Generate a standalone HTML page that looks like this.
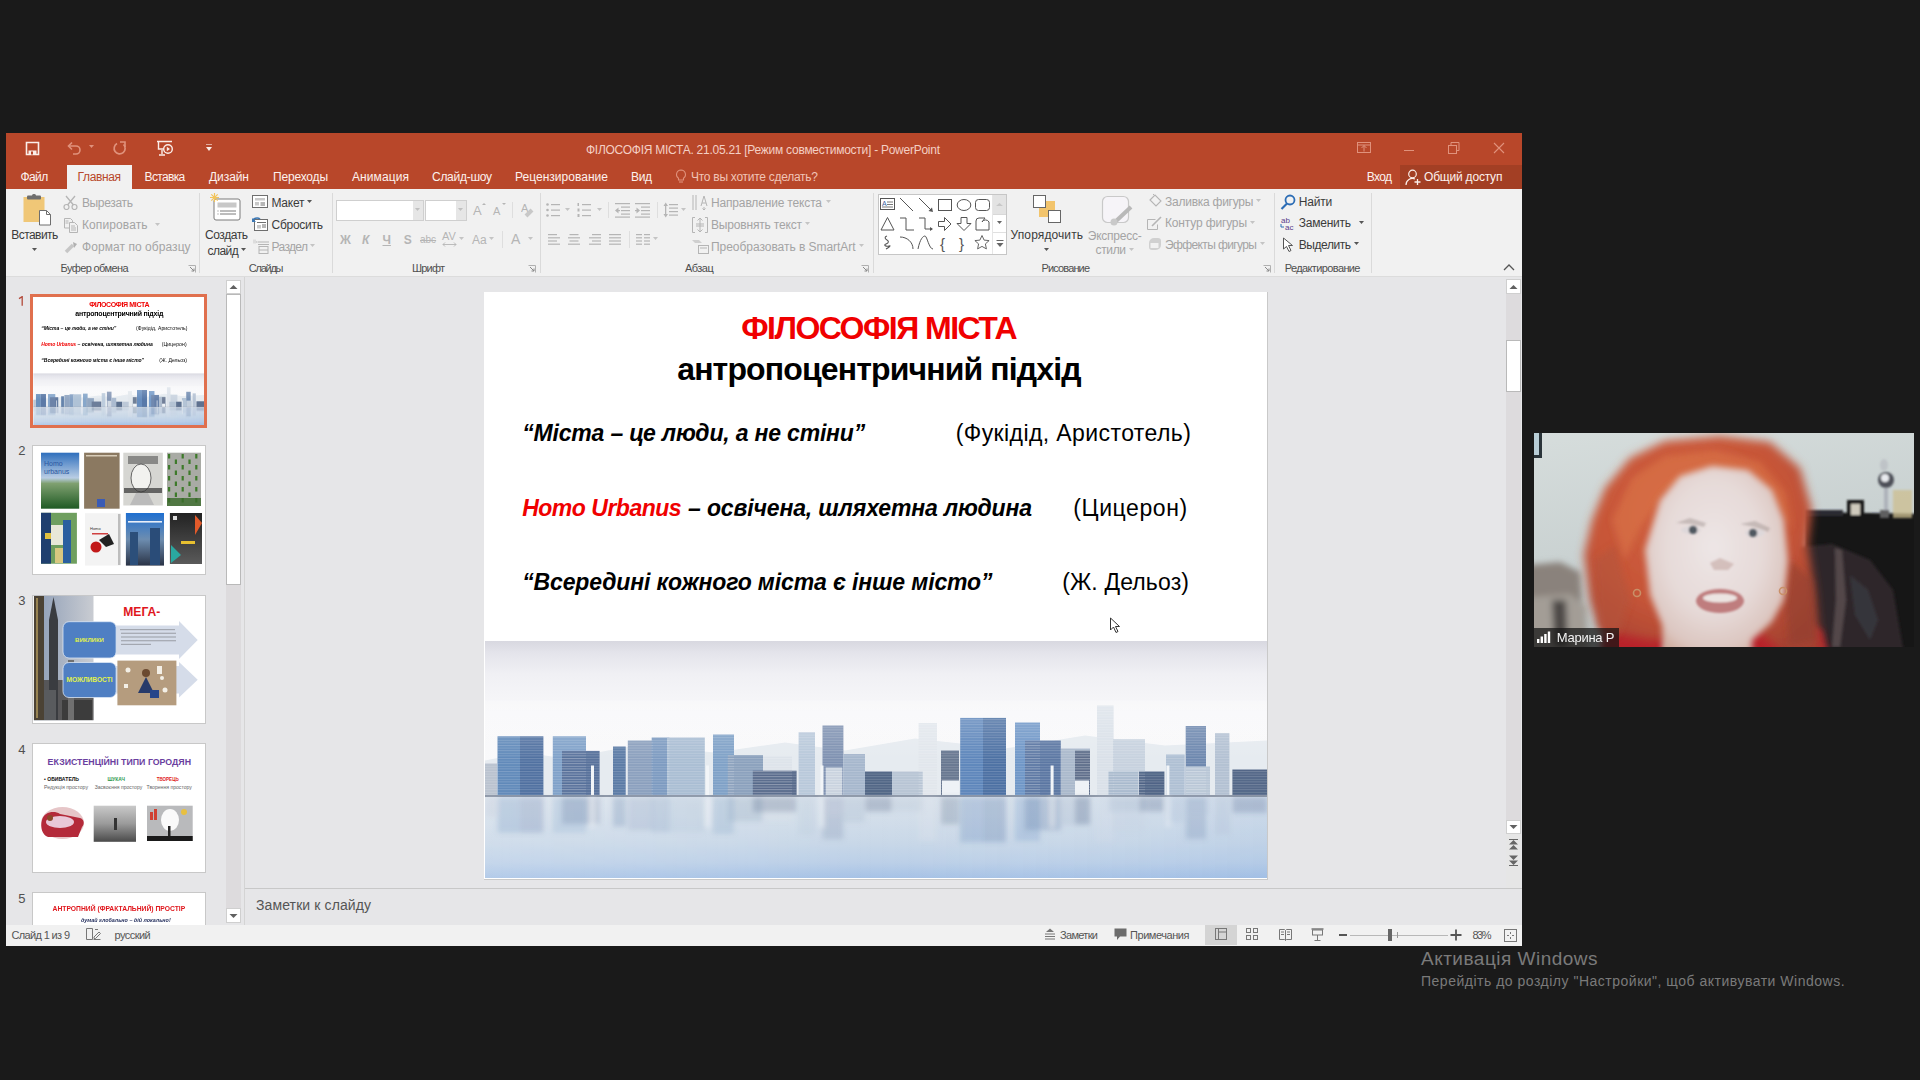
<!DOCTYPE html>
<html><head><meta charset="utf-8">
<style>
*{margin:0;padding:0;box-sizing:border-box}
html,body{width:1920px;height:1080px;overflow:hidden;background:#1a1a1a;font-family:"Liberation Sans",sans-serif}
.a{position:absolute;display:block}
.t{position:absolute;white-space:nowrap;line-height:1}
</style></head><body>
<div class="a" style="left:6px;top:133px;width:1516px;height:813px;background:#e6e6e8;"></div>
<div class="a" style="left:6px;top:133px;width:1516px;height:56px;background:#b8472a;"></div>
<div class="a" style="left:1400px;top:165px;width:122px;height:24px;background:#a33f24;"></div>
<div class="a" style="left:67px;top:165px;width:65px;height:24px;background:#f1f1f1;"></div>
<div class="a" style="left:6px;top:189px;width:1516px;height:88px;background:#f1f1f1;"></div>
<div class="a" style="left:6px;top:276px;width:1516px;height:1px;background:#dcdcdc;"></div>
<div class="a" style="left:6px;top:925px;width:1516px;height:21px;background:#f1f1f1;"></div>
<div class="t" style="left:586.00px;top:143.50px;font-size:12px;color:#f4cfc4;letter-spacing:-0.262px">ФІЛОСОФІЯ МІСТА. 21.05.21 [Режим совместимости] - PowerPoint</div>
<div class="t" style="left:20.50px;top:170.80px;font-size:12px;color:#fdf2ee;letter-spacing:-0.601px">Файл</div>
<div class="t" style="left:144.60px;top:170.80px;font-size:12px;color:#fdf2ee;letter-spacing:-0.651px">Вставка</div>
<div class="t" style="left:209.00px;top:170.80px;font-size:12px;color:#fdf2ee;letter-spacing:-0.067px">Дизайн</div>
<div class="t" style="left:273.00px;top:170.80px;font-size:12px;color:#fdf2ee;letter-spacing:-0.183px">Переходы</div>
<div class="t" style="left:352.00px;top:170.80px;font-size:12px;color:#fdf2ee;letter-spacing:0.095px">Анимация</div>
<div class="t" style="left:432.00px;top:170.80px;font-size:12px;color:#fdf2ee;letter-spacing:-0.276px">Слайд-шоу</div>
<div class="t" style="left:515.00px;top:170.80px;font-size:12px;color:#fdf2ee;letter-spacing:0.026px">Рецензирование</div>
<div class="t" style="left:631.00px;top:170.80px;font-size:12px;color:#fdf2ee;letter-spacing:-0.355px">Вид</div>
<div class="t" style="left:77.60px;top:170.80px;font-size:12px;color:#b8472a;letter-spacing:-0.379px">Главная</div>
<div class="t" style="left:691.00px;top:170.80px;font-size:12px;color:#f0c4b6;letter-spacing:-0.269px">Что вы хотите сделать?</div>
<div class="t" style="left:1366.70px;top:170.80px;font-size:12px;color:#fdf2ee;letter-spacing:-0.616px">Вход</div>
<div class="t" style="left:1424.00px;top:170.80px;font-size:12px;color:#fdf2ee;letter-spacing:-0.202px">Общий доступ</div>
<svg class="a" style="left:25px;top:141px;" width="15" height="15" viewBox="0 0 15 15"><path d="M1.5 1.5h12v12h-12z" fill="none" stroke="#fbeee9" stroke-width="1.6"/><rect x="3.5" y="9.5" width="8" height="4" fill="#fbeee9"/><rect x="6" y="10.5" width="2" height="3" fill="#b8472a"/></svg>
<svg class="a" style="left:66px;top:141px;" width="16" height="15" viewBox="0 0 16 15"><path d="M3 5h7a4 4 0 0 1 0 8H7" fill="none" stroke="#e0927c" stroke-width="1.6"/><path d="M6 1.5L2.5 5 6 8.5" fill="none" stroke="#e0927c" stroke-width="1.6"/></svg>
<svg class="a" style="left:89px;top:145px;" width="6" height="4" viewBox="0 0 6 4"><path d="M0 0h5L2.5 3z" fill="#e0927c"/></svg>
<svg class="a" style="left:112px;top:141px;" width="16" height="15" viewBox="0 0 16 15"><path d="M11.5 3.5A5.5 5.5 0 1 1 5 2.6" fill="none" stroke="#e0927c" stroke-width="1.7"/><path d="M8 1h5v5" fill="none" stroke="#e0927c" stroke-width="1.6"/></svg>
<svg class="a" style="left:156px;top:140px;" width="18" height="17" viewBox="0 0 18 17"><path d="M1 1.5h15M2.5 2v7h7" fill="none" stroke="#fbeee9" stroke-width="1.4"/><circle cx="12" cy="9" r="4.3" fill="#b8472a" stroke="#fbeee9" stroke-width="1.4"/><path d="M10.8 6.8v4.4l3.2-2.2z" fill="#fbeee9"/><path d="M6 10v4M3 15h6" stroke="#fbeee9" stroke-width="1.4"/></svg>
<svg class="a" style="left:206px;top:144px;" width="7" height="8" viewBox="0 0 7 8"><path d="M0 0h6" stroke="#fbeee9" stroke-width="1.2"/><path d="M0 3h6L3 7z" fill="#fbeee9"/></svg>
<svg class="a" style="left:1357px;top:142px;" width="15" height="12" viewBox="0 0 15 12"><rect x="0.5" y="0.5" width="13" height="10" fill="none" stroke="#e0927c"/><path d="M0.5 3h13" stroke="#e0927c"/><path d="M7 3.5v6M4.5 6l2.5-2.5L9.5 6" fill="none" stroke="#e0927c"/></svg>
<div class="a" style="left:1404px;top:150px;width:10px;height:1px;background:#e0927c;"></div>
<svg class="a" style="left:1448px;top:142px;" width="12" height="12" viewBox="0 0 12 12"><rect x="0.5" y="3.5" width="8" height="8" fill="none" stroke="#e0927c"/><path d="M3 3.5V0.5h8v8H8.5" fill="none" stroke="#e0927c"/></svg>
<svg class="a" style="left:1493px;top:142px;" width="12" height="12" viewBox="0 0 12 12"><path d="M1 1l10 10M11 1L1 11" stroke="#e0927c" stroke-width="1.1"/></svg>
<svg class="a" style="left:675px;top:169px;" width="12" height="15" viewBox="0 0 12 15"><path d="M6 1a4.5 4.5 0 0 0-2.5 8.2V11h5V9.2A4.5 4.5 0 0 0 6 1z" fill="none" stroke="#e0927c" stroke-width="1.1"/><path d="M4 13h4" stroke="#e0927c" stroke-width="1.1"/></svg>
<svg class="a" style="left:1405px;top:169px;" width="17" height="17" viewBox="0 0 17 17"><circle cx="7.5" cy="5" r="3.8" fill="none" stroke="#fbeee9" stroke-width="1.2"/><path d="M1 16a6.5 6.5 0 0 1 9-6" fill="none" stroke="#fbeee9" stroke-width="1.2"/><path d="M12.5 10v6M9.5 13h6" stroke="#fbeee9" stroke-width="1.3"/></svg>
<div class="t" style="left:60.60px;top:263.40px;font-size:11px;color:#4f4f4f;letter-spacing:-0.613px">Буфер обмена</div>
<div class="t" style="left:248.75px;top:263.40px;font-size:11px;color:#4f4f4f;letter-spacing:-1.240px">Слайды</div>
<div class="t" style="left:412.00px;top:263.40px;font-size:11px;color:#4f4f4f;letter-spacing:-0.797px">Шрифт</div>
<div class="t" style="left:685.00px;top:263.40px;font-size:11px;color:#4f4f4f;letter-spacing:-0.527px">Абзац</div>
<div class="t" style="left:1041.50px;top:263.40px;font-size:11px;color:#4f4f4f;letter-spacing:-0.862px">Рисование</div>
<div class="t" style="left:1284.70px;top:263.40px;font-size:11px;color:#4f4f4f;letter-spacing:-0.615px">Редактирование</div>
<div class="a" style="left:199px;top:193px;width:1px;height:80px;background:#dadada;"></div>
<div class="a" style="left:332px;top:193px;width:1px;height:80px;background:#dadada;"></div>
<div class="a" style="left:540px;top:193px;width:1px;height:80px;background:#dadada;"></div>
<div class="a" style="left:873px;top:193px;width:1px;height:80px;background:#dadada;"></div>
<div class="a" style="left:1274px;top:193px;width:1px;height:80px;background:#dadada;"></div>
<div class="a" style="left:1371px;top:193px;width:1px;height:80px;background:#dadada;"></div>
<svg class="a" style="left:188px;top:265px;transform:rotate(0deg)" width="8" height="8" viewBox="0 0 8 8"><path d="M0.5 0.5h7v7" fill="none" stroke="#b0b0b0"/><path d="M2 2l4 4M3.5 6H6V3.5" fill="none" stroke="#8a8a8a"/></svg>
<svg class="a" style="left:528px;top:265px;transform:rotate(0deg)" width="8" height="8" viewBox="0 0 8 8"><path d="M0.5 0.5h7v7" fill="none" stroke="#b0b0b0"/><path d="M2 2l4 4M3.5 6H6V3.5" fill="none" stroke="#8a8a8a"/></svg>
<svg class="a" style="left:861px;top:265px;transform:rotate(0deg)" width="8" height="8" viewBox="0 0 8 8"><path d="M0.5 0.5h7v7" fill="none" stroke="#b0b0b0"/><path d="M2 2l4 4M3.5 6H6V3.5" fill="none" stroke="#8a8a8a"/></svg>
<svg class="a" style="left:1263px;top:265px;transform:rotate(0deg)" width="8" height="8" viewBox="0 0 8 8"><path d="M0.5 0.5h7v7" fill="none" stroke="#b0b0b0"/><path d="M2 2l4 4M3.5 6H6V3.5" fill="none" stroke="#8a8a8a"/></svg>
<svg class="a" style="left:1503px;top:264px;" width="12" height="8" viewBox="0 0 12 8"><path d="M1 6l5-5 5 5" fill="none" stroke="#555" stroke-width="1.3"/></svg>
<svg class="a" style="left:22px;top:194px;" width="30" height="32" viewBox="0 0 30 32"><rect x="1.5" y="3" width="21" height="25" fill="#f0c777" /><rect x="5" y="1.5" width="14" height="4" rx="1" fill="#6e6e6e"/><rect x="10" y="0" width="4" height="3" rx="1.5" fill="#6e6e6e"/><path d="M17.5 16.5h7l4 4v10.5h-11z" fill="#fff" stroke="#6e6e6e" stroke-width="1"/><path d="M24.5 16.5v4h4" fill="none" stroke="#6e6e6e"/></svg>
<div class="t" style="left:11.25px;top:229.40px;font-size:12px;color:#3b3b3b;letter-spacing:-0.552px">Вставить</div>
<svg class="a" style="left:32px;top:248px;" width="6" height="4" viewBox="0 0 6 4"><path d="M0 0h5L2.5 3z" fill="#555"/></svg>
<svg class="a" style="left:63px;top:195px;" width="15" height="15" viewBox="0 0 15 15"><path d="M3 1l7.5 9M12 1L4.5 10" stroke="#b5b5b5" stroke-width="1.3"/><circle cx="3.5" cy="12" r="2.5" fill="none" stroke="#b5b5b5" stroke-width="1.2"/><circle cx="11.5" cy="12" r="2.5" fill="none" stroke="#b5b5b5" stroke-width="1.2"/></svg>
<div class="t" style="left:81.90px;top:196.70px;font-size:12px;color:#a4a4a4;letter-spacing:-0.325px">Вырезать</div>
<svg class="a" style="left:63px;top:217px;" width="16" height="16" viewBox="0 0 16 16"><path d="M1.5 1.5h6l2 2V11h-8z" fill="none" stroke="#b5b5b5"/><path d="M6.5 5.5h5l3 3v7h-8z" fill="#f1f1f1" stroke="#b5b5b5"/><path d="M8 9h4M8 11h5M8 13h5M2.5 4h3M2.5 6h3" stroke="#b5b5b5"/></svg>
<div class="t" style="left:82.00px;top:218.80px;font-size:12px;color:#a4a4a4;letter-spacing:0.099px">Копировать</div>
<svg class="a" style="left:155px;top:223px;" width="6" height="4" viewBox="0 0 6 4"><path d="M0 0h5L2.5 3z" fill="#c4c4c4"/></svg>
<svg class="a" style="left:64px;top:240px;" width="15" height="14" viewBox="0 0 15 14"><path d="M2 12l7-7" stroke="#c6c6c6" stroke-width="3.5"/><path d="M9 2l4 2-3 4" fill="#b0b0b0"/></svg>
<div class="t" style="left:82.00px;top:240.70px;font-size:12px;color:#a4a4a4;letter-spacing:0.062px">Формат по образцу</div>
<svg class="a" style="left:210px;top:193px;" width="32" height="29" viewBox="0 0 32 29"><rect x="4" y="6" width="26" height="21" rx="2" fill="#fff" stroke="#7b7b7b" stroke-width="1"/><rect x="7.5" y="9.5" width="19" height="5" fill="#c8c8c8"/><path d="M10 18h16M10 21h16" stroke="#7b7b7b"/><path d="M7.5 18h1M7.5 21h1" stroke="#7b7b7b"/><g stroke="#f2c45a" stroke-width="1.2"><path d="M4.5 0v9M0 4.5h9M1.3 1.3l6.4 6.4M7.7 1.3L1.3 7.7"/></g></svg>
<div class="t" style="left:205.00px;top:229.40px;font-size:12px;color:#3b3b3b;letter-spacing:-0.434px">Создать</div>
<div class="t" style="left:207.50px;top:244.80px;font-size:12px;color:#3b3b3b;letter-spacing:-0.532px">слайд</div>
<svg class="a" style="left:241.4px;top:248px;" width="6" height="4" viewBox="0 0 6 4"><path d="M0 0h5L2.5 3z" fill="#555"/></svg>
<svg class="a" style="left:252px;top:195px;" width="17" height="14" viewBox="0 0 17 14"><rect x="0.5" y="0.5" width="15" height="12" fill="#fff" stroke="#6e6e6e"/><rect x="3" y="3" width="10" height="2.5" fill="#c8c8c8"/><rect x="3" y="7" width="4" height="3.5" fill="#c8c8c8"/><path d="M8.5 8h4.5M8.5 10h4.5" stroke="#6e6e6e"/></svg>
<div class="t" style="left:271.50px;top:196.70px;font-size:12px;color:#3b3b3b;letter-spacing:-0.265px">Макет</div>
<svg class="a" style="left:307px;top:200px;" width="6" height="4" viewBox="0 0 6 4"><path d="M0 0h5L2.5 3z" fill="#555"/></svg>
<svg class="a" style="left:252px;top:216px;" width="17" height="16" viewBox="0 0 17 16"><rect x="2.5" y="3.5" width="13" height="11" fill="#fff" stroke="#6e6e6e"/><rect x="5" y="9" width="4" height="3.5" fill="#c8c8c8"/><path d="M10 9h4M10 11h4M5 6.5h9" stroke="#6e6e6e"/><path d="M1 5a4 3 0 0 1 7-2" fill="none" stroke="#3c78b5" stroke-width="1.6"/><path d="M0 2v4h4" fill="#3c78b5"/></svg>
<div class="t" style="left:271.50px;top:218.55px;font-size:12px;color:#3b3b3b;letter-spacing:-0.262px">Сбросить</div>
<svg class="a" style="left:253px;top:239px;" width="17" height="16" viewBox="0 0 17 16"><path d="M0.5 3h4M5 3h11M5 5.5h11" stroke="#b5b5b5"/><rect x="6" y="7.5" width="9" height="7" fill="none" stroke="#b5b5b5"/><path d="M6 11h9" stroke="#b5b5b5"/><rect x="0" y="0.5" width="3" height="4" fill="#ddd"/></svg>
<div class="t" style="left:271.50px;top:240.70px;font-size:12px;color:#a4a4a4;letter-spacing:-0.632px">Раздел</div>
<svg class="a" style="left:310px;top:244px;" width="6" height="4" viewBox="0 0 6 4"><path d="M0 0h5L2.5 3z" fill="#c4c4c4"/></svg>
<div class="a" style="left:336px;top:200px;width:88px;height:21px;background:#fff;border:1px solid #cfcfcf"></div>
<div class="a" style="left:413px;top:201px;width:10px;height:19px;background:#e6e6e6;"></div>
<svg class="a" style="left:415px;top:208px;" width="6" height="4" viewBox="0 0 6 4"><path d="M0 0h5L2.5 3z" fill="#c0c0c0"/></svg>
<div class="a" style="left:425px;top:200px;width:42px;height:21px;background:#fff;border:1px solid #cfcfcf"></div>
<div class="a" style="left:456px;top:201px;width:10px;height:19px;background:#e6e6e6;"></div>
<svg class="a" style="left:458px;top:208px;" width="6" height="4" viewBox="0 0 6 4"><path d="M0 0h5L2.5 3z" fill="#c0c0c0"/></svg>
<svg class="a" style="left:472px;top:202px;" width="14" height="14" viewBox="0 0 14 14"><text x="1" y="13" font-size="13" font-family="Liberation Sans" fill="#b5b5b5">A</text><path d="M10 3l2-2 2 2" fill="#b5b5b5"/></svg>
<svg class="a" style="left:492px;top:202px;" width="14" height="14" viewBox="0 0 14 14"><text x="1" y="13" font-size="11" font-family="Liberation Sans" fill="#b5b5b5">A</text><path d="M10 1l2 2 2-2" fill="#b5b5b5"/></svg>
<div class="a" style="left:512px;top:202px;width:1px;height:16px;background:#dedede;"></div>
<svg class="a" style="left:521px;top:202px;" width="14" height="16" viewBox="0 0 14 16"><text x="0" y="10" font-size="11" font-family="Liberation Sans" fill="#b5b5b5">A</text><path d="M5 14l6-6" stroke="#c8c8c8" stroke-width="4"/></svg>
<div class="t" style="left:340.00px;top:233.55px;font-size:12px;color:#b5b5b5;font-weight:bold">Ж</div>
<div class="t" style="left:362.00px;top:233.55px;font-size:12px;color:#b5b5b5;font-style:italic;font-weight:bold">К</div>
<div class="t" style="left:382.50px;top:233.55px;font-size:12px;color:#b5b5b5;text-decoration:underline;font-weight:bold">Ч</div>
<div class="t" style="left:403.75px;top:233.55px;font-size:12px;color:#b5b5b5;font-weight:bold">S</div>
<div class="t" style="left:420.00px;top:235.25px;font-size:10px;color:#b5b5b5;text-decoration:line-through">abc</div>
<div class="t" style="left:442.00px;top:230.65px;font-size:11px;color:#b5b5b5">AV</div>
<svg class="a" style="left:442px;top:242px;" width="15" height="5" viewBox="0 0 15 5"><path d="M1 2.5h13M3 0.5l-2 2 2 2M12 0.5l2 2-2 2" fill="none" stroke="#b5b5b5" stroke-width="0.9"/></svg>
<svg class="a" style="left:459px;top:237px;" width="6" height="4" viewBox="0 0 6 4"><path d="M0 0h5L2.5 3z" fill="#c4c4c4"/></svg>
<div class="t" style="left:472.00px;top:233.55px;font-size:12px;color:#b5b5b5">Aa</div>
<svg class="a" style="left:489px;top:237px;" width="6" height="4" viewBox="0 0 6 4"><path d="M0 0h5L2.5 3z" fill="#c4c4c4"/></svg>
<div class="a" style="left:502px;top:231px;width:1px;height:17px;background:#dedede;"></div>
<div class="t" style="left:511.00px;top:231.85px;font-size:14px;color:#b5b5b5">A</div>
<svg class="a" style="left:528px;top:237px;" width="6" height="4" viewBox="0 0 6 4"><path d="M0 0h5L2.5 3z" fill="#c4c4c4"/></svg>
<svg class="a" style="left:546px;top:203px;" width="16" height="15" viewBox="0 0 16 15"><g fill="#b5b5b5"><circle cx="1.5" cy="1.5" r="1.3"/><circle cx="1.5" cy="7" r="1.3"/><circle cx="1.5" cy="12.5" r="1.3"/><rect x="5" y="1" width="9" height="1.2"/><rect x="5" y="6.5" width="9" height="1.2"/><rect x="5" y="12" width="9" height="1.2"/></g></svg>
<svg class="a" style="left:565px;top:208px;" width="6" height="4" viewBox="0 0 6 4"><path d="M0 0h5L2.5 3z" fill="#c4c4c4"/></svg>
<svg class="a" style="left:577px;top:203px;" width="16" height="15" viewBox="0 0 16 15"><g fill="#b5b5b5"><rect x="0.5" y="0" width="1.5" height="3"/><rect x="0.5" y="5.5" width="2" height="3"/><rect x="0.5" y="11" width="2" height="3"/><rect x="5" y="1" width="9" height="1.2"/><rect x="5" y="6.5" width="9" height="1.2"/><rect x="5" y="12" width="9" height="1.2"/></g></svg>
<svg class="a" style="left:597px;top:208px;" width="6" height="4" viewBox="0 0 6 4"><path d="M0 0h5L2.5 3z" fill="#c4c4c4"/></svg>
<div class="a" style="left:608px;top:202px;width:1px;height:16px;background:#dedede;"></div>
<svg class="a" style="left:615px;top:203px;" width="16" height="15" viewBox="0 0 16 15"><g fill="#b5b5b5"><rect x="0" y="0" width="15" height="1.2"/><rect x="6" y="3.5" width="9" height="1.2"/><rect x="6" y="7" width="9" height="1.2"/><rect x="6" y="10.5" width="9" height="1.2"/><rect x="0" y="13.5" width="15" height="1.2"/><path d="M0 7.5l3.5-3v6z"/><rect x="2" y="7" width="3" height="1.2"/></g></svg>
<svg class="a" style="left:635px;top:203px;" width="16" height="15" viewBox="0 0 16 15"><g fill="#b5b5b5"><rect x="0" y="0" width="15" height="1.2"/><rect x="6" y="3.5" width="9" height="1.2"/><rect x="6" y="7" width="9" height="1.2"/><rect x="6" y="10.5" width="9" height="1.2"/><rect x="0" y="13.5" width="15" height="1.2"/><path d="M5 7.5l-3.5-3v6z"/><rect x="0" y="7" width="3" height="1.2"/></g></svg>
<div class="a" style="left:657px;top:202px;width:1px;height:16px;background:#dedede;"></div>
<svg class="a" style="left:663px;top:202px;" width="16" height="16" viewBox="0 0 16 16"><g fill="#b5b5b5"><rect x="6" y="2" width="9" height="1.2"/><rect x="6" y="5.5" width="9" height="1.2"/><rect x="6" y="9" width="9" height="1.2"/><rect x="6" y="12.5" width="9" height="1.2"/><rect x="2" y="2" width="1.3" height="12"/><path d="M0.5 4l2.2-3.5L5 4zM0.5 12l2.2 3.5L5 12z"/></g></svg>
<svg class="a" style="left:681px;top:208px;" width="6" height="4" viewBox="0 0 6 4"><path d="M0 0h5L2.5 3z" fill="#c4c4c4"/></svg>
<svg class="a" style="left:548px;top:234px;" width="14" height="14" viewBox="0 0 14 14"><rect x="0" y="0.0" width="9" height="1.2" fill="#b5b5b5"/><rect x="0" y="3.2" width="12" height="1.2" fill="#b5b5b5"/><rect x="0" y="6.4" width="9" height="1.2" fill="#b5b5b5"/><rect x="0" y="9.600000000000001" width="12" height="1.2" fill="#b5b5b5"/></svg>
<svg class="a" style="left:568px;top:234px;" width="14" height="14" viewBox="0 0 14 14"><rect x="1.5" y="0.0" width="9" height="1.2" fill="#b5b5b5"/><rect x="0" y="3.2" width="12" height="1.2" fill="#b5b5b5"/><rect x="1.5" y="6.4" width="9" height="1.2" fill="#b5b5b5"/><rect x="0" y="9.600000000000001" width="12" height="1.2" fill="#b5b5b5"/></svg>
<svg class="a" style="left:589px;top:234px;" width="14" height="14" viewBox="0 0 14 14"><rect x="3" y="0.0" width="9" height="1.2" fill="#b5b5b5"/><rect x="0" y="3.2" width="12" height="1.2" fill="#b5b5b5"/><rect x="3" y="6.4" width="9" height="1.2" fill="#b5b5b5"/><rect x="0" y="9.600000000000001" width="12" height="1.2" fill="#b5b5b5"/></svg>
<svg class="a" style="left:609px;top:234px;" width="14" height="14" viewBox="0 0 14 14"><rect x="0" y="0.0" width="12" height="1.2" fill="#b5b5b5"/><rect x="0" y="3.2" width="12" height="1.2" fill="#b5b5b5"/><rect x="0" y="6.4" width="12" height="1.2" fill="#b5b5b5"/><rect x="0" y="9.600000000000001" width="12" height="1.2" fill="#b5b5b5"/></svg>
<div class="a" style="left:629px;top:231px;width:1px;height:17px;background:#dedede;"></div>
<svg class="a" style="left:636px;top:234px;" width="16" height="12" viewBox="0 0 16 12"><rect x="0" y="0.0" width="6" height="1.2" fill="#b5b5b5"/><rect x="8" y="0.0" width="6" height="1.2" fill="#b5b5b5"/><rect x="0" y="3.2" width="6" height="1.2" fill="#b5b5b5"/><rect x="8" y="3.2" width="6" height="1.2" fill="#b5b5b5"/><rect x="0" y="6.4" width="6" height="1.2" fill="#b5b5b5"/><rect x="8" y="6.4" width="6" height="1.2" fill="#b5b5b5"/><rect x="0" y="9.600000000000001" width="6" height="1.2" fill="#b5b5b5"/><rect x="8" y="9.600000000000001" width="6" height="1.2" fill="#b5b5b5"/></svg>
<svg class="a" style="left:653px;top:237px;" width="6" height="4" viewBox="0 0 6 4"><path d="M0 0h5L2.5 3z" fill="#c4c4c4"/></svg>
<svg class="a" style="left:692px;top:194px;" width="18" height="17" viewBox="0 0 18 17"><path d="M1 1v15M4 1v15" stroke="#b5b5b5"/><path d="M9 12l3-10 3 10M10 9h4M12 13v3M10.5 14.5L12 16l1.5-1.5" fill="none" stroke="#b5b5b5"/></svg>
<div class="t" style="left:711.00px;top:196.70px;font-size:12px;color:#a4a4a4;letter-spacing:-0.162px">Направление текста</div>
<svg class="a" style="left:826px;top:200px;" width="6" height="4" viewBox="0 0 6 4"><path d="M0 0h5L2.5 3z" fill="#c4c4c4"/></svg>
<svg class="a" style="left:692px;top:217px;" width="18" height="16" viewBox="0 0 18 16"><path d="M3 0.5H0.5v15H3M13 0.5h2.5v15H13" fill="none" stroke="#b5b5b5"/><path d="M8 1v14M5.5 3.5L8 1l2.5 2.5M5.5 12.5L8 15l2.5-2.5M4 7h8M4 9h8" fill="none" stroke="#b5b5b5"/></svg>
<div class="t" style="left:711.00px;top:218.55px;font-size:12px;color:#a4a4a4;letter-spacing:-0.177px">Выровнять текст</div>
<svg class="a" style="left:805px;top:222px;" width="6" height="4" viewBox="0 0 6 4"><path d="M0 0h5L2.5 3z" fill="#c4c4c4"/></svg>
<svg class="a" style="left:692px;top:240px;" width="18" height="14" viewBox="0 0 18 14"><path d="M0 0h7l3 3H3z" fill="#cfcfcf"/><rect x="6.5" y="5.5" width="10" height="8" fill="none" stroke="#b5b5b5"/><path d="M8 8h7" stroke="#b5b5b5"/></svg>
<div class="t" style="left:711.00px;top:240.70px;font-size:12px;color:#a4a4a4;letter-spacing:-0.042px">Преобразовать в SmartArt</div>
<svg class="a" style="left:859px;top:244px;" width="6" height="4" viewBox="0 0 6 4"><path d="M0 0h5L2.5 3z" fill="#c4c4c4"/></svg>
<div class="a" style="left:878px;top:194px;width:129px;height:61px;background:#fff;border:1px solid #c6c6c6"></div>
<div class="a" style="left:993px;top:195px;width:13px;height:19px;background:#e3e3e3;"></div>
<div class="a" style="left:993px;top:214px;width:13px;height:1px;background:#d8d8d8;"></div>
<div class="a" style="left:993px;top:232px;width:13px;height:1px;background:#e0e0e0;"></div>
<div class="a" style="left:992px;top:195px;width:1px;height:59px;background:#e6e6e6;"></div>
<svg class="a" style="left:995px;top:202px;" width="9" height="6" viewBox="0 0 9 6"><path d="M1 4l3.5-3 3.5 3z" fill="#c8c8c8"/></svg>
<svg class="a" style="left:996.5px;top:221px;" width="6" height="4" viewBox="0 0 6 4"><path d="M0 0h5L2.5 3z" fill="#666"/></svg>
<svg class="a" style="left:996px;top:240px;" width="8" height="8" viewBox="0 0 8 8"><path d="M0.5 0.5h7" stroke="#666"/><path d="M0.5 3h7L4 7z" fill="#666"/></svg>
<svg class="a" style="left:0;top:0" width="1920" height="300" viewBox="0 0 1920 300"><rect x="880.5" y="198.5" width="14" height="11" fill="none" stroke="#555"/><text x="882" y="206" font-size="7" font-family="Liberation Sans" fill="#3c5fa0">A</text><path d="M887 202h6M887 204.5h6M882 207h11" stroke="#555" stroke-width="0.8"/><path d="M900 198l13 13" stroke="#555"/><path d="M919 198l12 12" stroke="#555"/><path d="M933 212l-4.5-1 3.5-3.5z" fill="#555"/><rect x="938.5" y="199.5" width="13" height="11" fill="none" stroke="#555"/><ellipse cx="964" cy="205" rx="6.8" ry="5.5" fill="none" stroke="#555"/><rect x="975.5" y="199.5" width="14" height="11" rx="3" fill="none" stroke="#555"/><path d="M887.5 217.5l-6.5 12.5h13z" fill="none" stroke="#555"/><path d="M900 218h6v12h8" fill="none" stroke="#555"/><path d="M919 218h6v11h7" fill="none" stroke="#555"/><path d="M933 229l-3-2v4z" fill="#555"/><path d="M938.5 221.5h6v-4l6.5 6.5-6.5 6.5v-4h-6z" fill="none" stroke="#555"/><path d="M961 217.5h6v6h4l-7 7-7-7h4z" fill="none" stroke="#555"/><path d="M976 230v-9a3 3 0 0 1 3-3h6l-3 4a4 4 0 0 1 7 0v8z" fill="none" stroke="#555"/><path d="M887 236c-3 1-2 3 0 4s2 3-1 4 0 3 3 2-1 2-3 3" fill="none" stroke="#555" stroke-width="1.1"/><path d="M900 237c7 0 13 5 13 12" fill="none" stroke="#555"/><path d="M918 249c2-10 5-13 7-13s4 13 8 13" fill="none" stroke="#555"/><text x="940" y="249" font-size="15" font-family="Liberation Sans" fill="#555">{</text><text x="959" y="249" font-size="15" font-family="Liberation Sans" fill="#555">}</text><path d="M982 235.5l2.1 4.6 5 .5-3.7 3.3 1 5-4.4-2.5-4.4 2.5 1-5-3.7-3.3 5-.5z" fill="none" stroke="#555" stroke-width="0.9"/></svg>
<svg class="a" style="left:1032px;top:194px;" width="31" height="30" viewBox="0 0 31 30"><rect x="7" y="7" width="16" height="16" fill="#f2c46c"/><rect x="1.5" y="1.5" width="12" height="12" fill="#fff" stroke="#666"/><rect x="16.5" y="16.5" width="12" height="12" fill="#fff" stroke="#666"/></svg>
<div class="t" style="left:1010.60px;top:229.40px;font-size:12px;color:#3b3b3b;letter-spacing:0.099px">Упорядочить</div>
<svg class="a" style="left:1044px;top:248px;" width="6" height="4" viewBox="0 0 6 4"><path d="M0 0h5L2.5 3z" fill="#555"/></svg>
<svg class="a" style="left:1100px;top:195px;" width="34" height="32" viewBox="0 0 34 32"><rect x="2.5" y="1.5" width="26" height="26" rx="5" fill="#f6f4f8" stroke="#c9c9c9" stroke-width="1.2"/><path d="M15 27l16-15" stroke="#b9b9b9" stroke-width="4"/><circle cx="14" cy="27" r="3.5" fill="#c9c9c9"/></svg>
<div class="t" style="left:1087.80px;top:229.50px;font-size:12px;color:#a4a4a4;letter-spacing:-0.244px">Экспресс-</div>
<div class="t" style="left:1095.60px;top:244.30px;font-size:12px;color:#a4a4a4;letter-spacing:-0.376px">стили</div>
<svg class="a" style="left:1129px;top:248px;" width="6" height="4" viewBox="0 0 6 4"><path d="M0 0h5L2.5 3z" fill="#c4c4c4"/></svg>
<svg class="a" style="left:1148px;top:194px;" width="15" height="14" viewBox="0 0 15 14"><path d="M2 6l5-5 6 6-5 5z" fill="none" stroke="#b5b5b5" stroke-width="1.1"/><path d="M6 1l-1-1" stroke="#b5b5b5"/></svg>
<div class="t" style="left:1165.00px;top:195.80px;font-size:12px;color:#a4a4a4;letter-spacing:-0.249px">Заливка фигуры</div>
<svg class="a" style="left:1256px;top:199px;" width="6" height="4" viewBox="0 0 6 4"><path d="M0 0h5L2.5 3z" fill="#c4c4c4"/></svg>
<svg class="a" style="left:1147px;top:216px;" width="16" height="14" viewBox="0 0 16 14"><path d="M0.5 3.5h8M0.5 3.5v10h10v-5" fill="none" stroke="#b5b5b5"/><path d="M5 10l9-9" stroke="#b5b5b5" stroke-width="1.6"/></svg>
<div class="t" style="left:1165.00px;top:217.30px;font-size:12px;color:#a4a4a4;letter-spacing:-0.159px">Контур фигуры</div>
<svg class="a" style="left:1250px;top:221px;" width="6" height="4" viewBox="0 0 6 4"><path d="M0 0h5L2.5 3z" fill="#c4c4c4"/></svg>
<svg class="a" style="left:1147px;top:237px;" width="15" height="14" viewBox="0 0 15 14"><path d="M2 6a5 5 0 0 1 5-5h4a3 3 0 0 1 3 3v4a5 5 0 0 1-5 5H5a3 3 0 0 1-3-3z" fill="#d0d0d0"/><path d="M3.5 6h8v5h-8z" fill="#f1f1f1"/></svg>
<div class="t" style="left:1165.00px;top:238.80px;font-size:12px;color:#a4a4a4;letter-spacing:-0.616px">Эффекты фигуры</div>
<svg class="a" style="left:1260px;top:242px;" width="6" height="4" viewBox="0 0 6 4"><path d="M0 0h5L2.5 3z" fill="#c4c4c4"/></svg>
<svg class="a" style="left:1280px;top:194px;" width="16" height="16" viewBox="0 0 16 16"><circle cx="10" cy="6" r="4.5" fill="none" stroke="#2d6db5" stroke-width="1.8"/><path d="M7 9.5L1.5 15" stroke="#2d6db5" stroke-width="2.2"/></svg>
<div class="t" style="left:1298.75px;top:195.90px;font-size:12px;color:#3b3b3b;letter-spacing:-0.173px">Найти</div>
<svg class="a" style="left:1280px;top:216px;" width="17" height="15" viewBox="0 0 17 15"><text x="1" y="7" font-size="8" font-family="Liberation Sans" fill="#5a3d8a">ab</text><text x="5" y="14" font-size="8" font-family="Liberation Sans" fill="#5a3d8a">ac</text><path d="M1 8v3h3" fill="none" stroke="#2d6db5"/></svg>
<div class="t" style="left:1298.75px;top:217.30px;font-size:12px;color:#3b3b3b;letter-spacing:-0.239px">Заменить</div>
<svg class="a" style="left:1359px;top:221px;" width="6" height="4" viewBox="0 0 6 4"><path d="M0 0h5L2.5 3z" fill="#555"/></svg>
<svg class="a" style="left:1282px;top:237px;" width="14" height="15" viewBox="0 0 14 15"><path d="M1.5 1v11l3-2.5 2.5 5 2-1-2.5-5h4z" fill="#fff" stroke="#555"/></svg>
<div class="t" style="left:1298.75px;top:238.80px;font-size:12px;color:#3b3b3b;letter-spacing:-0.444px">Выделить</div>
<svg class="a" style="left:1354px;top:242px;" width="6" height="4" viewBox="0 0 6 4"><path d="M0 0h5L2.5 3z" fill="#555"/></svg>
<div class="a" style="left:244px;top:277px;width:1px;height:648px;background:#d4d4d4;"></div>
<div class="a" style="left:226px;top:280px;width:15px;height:643px;background:#dddbdd;"></div>
<div class="a" style="left:226px;top:280px;width:15px;height:14px;background:#fff;border:1px solid #cfcfcf"></div>
<svg class="a" style="left:229px;top:284px;" width="9" height="6" viewBox="0 0 9 6"><path d="M0.5 5L4.5 1 8.5 5z" fill="#606060"/></svg>
<div class="a" style="left:226px;top:294px;width:15px;height:291px;background:#fff;border:1px solid #b9b9b9"></div>
<div class="a" style="left:226px;top:908px;width:15px;height:15px;background:#fff;border:1px solid #cfcfcf"></div>
<svg class="a" style="left:229px;top:913px;" width="9" height="6" viewBox="0 0 9 6"><path d="M0.5 1L4.5 5 8.5 1z" fill="#606060"/></svg>
<div class="a" style="left:1506px;top:280px;width:15px;height:608px;background:#dddbdd;"></div>
<div class="a" style="left:1506px;top:279px;width:15px;height:15px;background:#fff;border:1px solid #cfcfcf"></div>
<svg class="a" style="left:1509px;top:284px;" width="9" height="6" viewBox="0 0 9 6"><path d="M0.5 5L4.5 1 8.5 5z" fill="#606060"/></svg>
<div class="a" style="left:1506px;top:340px;width:15px;height:52px;background:#fff;border:1px solid #b9b9b9"></div>
<div class="a" style="left:1506px;top:820px;width:15px;height:14px;background:#fff;border:1px solid #cfcfcf"></div>
<svg class="a" style="left:1509px;top:824px;" width="9" height="6" viewBox="0 0 9 6"><path d="M0.5 1L4.5 5 8.5 1z" fill="#606060"/></svg>
<div class="a" style="left:1506px;top:834px;width:15px;height:54px;background:#e6e6e6;"></div>
<svg class="a" style="left:1508px;top:839px;" width="11" height="11" viewBox="0 0 11 11"><path d="M1 5.5L5.5 1 10 5.5zM1 10.5L5.5 6 10 10.5z" fill="#666"/><rect x="1" y="0" width="9" height="1" fill="#666"/></svg>
<svg class="a" style="left:1508px;top:855px;" width="11" height="11" viewBox="0 0 11 11"><path d="M1 0.5L5.5 5 10 0.5zM1 5.5L5.5 10 10 5.5z" fill="#666"/><rect x="1" y="10" width="9" height="1" fill="#666"/></svg>
<div class="a" style="left:245px;top:888px;width:1277px;height:1px;background:#c8c8c8;"></div>
<div class="t" style="left:256.00px;top:898.10px;font-size:14px;color:#555;letter-spacing:0.107px">Заметки к слайду</div>
<div class="t" style="left:11.50px;top:929.65px;font-size:11px;color:#555;letter-spacing:-0.649px">Слайд 1 из 9</div>
<svg class="a" style="left:86px;top:927px;" width="16" height="14" viewBox="0 0 16 14"><path d="M0.5 1.5h6v11h-6zM7.5 12.5h7" fill="none" stroke="#777"/><path d="M8 10l5-5 1.5 1.5-5 5H8z" fill="none" stroke="#777"/><path d="M9 2.5h3" stroke="#777"/></svg>
<div class="t" style="left:114.60px;top:929.65px;font-size:11px;color:#555;letter-spacing:-0.579px">русский</div>
<svg class="a" style="left:1044px;top:928px;" width="12" height="12" viewBox="0 0 12 12"><path d="M6 0.5L2 4h8z" fill="#777"/><path d="M1 6h10M1 8.5h10M1 11h10" stroke="#777"/></svg>
<div class="t" style="left:1060.00px;top:929.65px;font-size:11px;color:#555;letter-spacing:-0.678px">Заметки</div>
<svg class="a" style="left:1114px;top:928px;" width="13" height="13" viewBox="0 0 13 13"><path d="M0.5 0.5h12v8H6l-3 3.5V8.5H0.5z" fill="#6c6c6c"/></svg>
<div class="t" style="left:1130.00px;top:929.65px;font-size:11px;color:#555;letter-spacing:-0.445px">Примечания</div>
<div class="a" style="left:1205px;top:925px;width:32px;height:20px;background:#d4d4d4;"></div>
<svg class="a" style="left:1215px;top:928px;" width="13" height="13" viewBox="0 0 13 13"><rect x="0.5" y="0.5" width="11" height="11" fill="none" stroke="#777"/><path d="M3.5 0.5v11M3.5 4h8" stroke="#777"/></svg>
<svg class="a" style="left:1246px;top:928px;" width="13" height="13" viewBox="0 0 13 13"><g fill="none" stroke="#777"><rect x="0.5" y="0.5" width="4" height="4"/><rect x="7.5" y="0.5" width="4" height="4"/><rect x="0.5" y="7.5" width="4" height="4"/><rect x="7.5" y="7.5" width="4" height="4"/></g></svg>
<svg class="a" style="left:1279px;top:928px;" width="13" height="14" viewBox="0 0 13 14"><path d="M0.5 1.5h5l1 1 1-1h5v10h-5l-1 1-1-1h-5z M6.5 2.5v10M2 4h3M2 6.5h3M8 4h3M8 6.5h3" fill="none" stroke="#777"/></svg>
<svg class="a" style="left:1311px;top:928px;" width="13" height="14" viewBox="0 0 13 14"><path d="M0.5 1h12" stroke="#777" stroke-width="1.5"/><rect x="1.5" y="2" width="10" height="5" fill="none" stroke="#777"/><path d="M6.5 7v5M3.5 12.5h6" stroke="#777"/></svg>
<div class="a" style="left:1339px;top:934px;width:8px;height:2px;background:#555;"></div>
<div class="a" style="left:1350px;top:935px;width:98px;height:1px;background:#b8b8b8;"></div>
<div class="a" style="left:1388px;top:929px;width:4px;height:12px;background:#666;"></div>
<div class="a" style="left:1397px;top:932px;width:1px;height:6px;background:#999;"></div>
<svg class="a" style="left:1450px;top:929px;" width="12" height="12" viewBox="0 0 12 12"><path d="M6 0.5v11M0.5 6h11" stroke="#555" stroke-width="1.8"/></svg>
<div class="t" style="left:1472.50px;top:929.65px;font-size:11px;color:#555;letter-spacing:-1.508px">83%</div>
<svg class="a" style="left:1504px;top:929px;" width="13" height="13" viewBox="0 0 13 13"><rect x="0.5" y="0.5" width="12" height="12" fill="none" stroke="#777"/><path d="M6.5 3v2M6.5 8v2M3 6.5h2M8 6.5h2" stroke="#777"/></svg>
<div class="t" style="left:1421.00px;top:948.85px;font-size:19px;color:#7a7a7a;letter-spacing:0.487px">Активація Windows</div>
<div class="t" style="left:1421.00px;top:974.10px;font-size:14px;color:#7a7a7a;letter-spacing:0.505px">Перейдіть до розділу "Настройки", щоб активувати Windows.</div>
<div class="a" style="left:484px;top:292px;width:784px;height:588px;background:#c9c9c9;"></div>
<div class="a" style="left:484px;top:292px;width:783px;height:587px;background:#fff;overflow:hidden"><div class="t" style="left:257.30px;top:19.80px;font-size:32px;color:#f00000;font-weight:bold;letter-spacing:-1.510px">ФІЛОСОФІЯ МІСТА</div>
<div class="t" style="left:193.20px;top:60.50px;font-size:32px;color:#000;font-weight:bold;letter-spacing:-0.858px">антропоцентричний підхід</div>
<div class="t" style="left:38.20px;top:129.65px;font-size:23px;color:#000;font-weight:bold;font-style:italic;letter-spacing:-0.182px">“Міста – це люди, а не стіни”</div>
<div class="t" style="left:471.70px;top:129.95px;font-size:23px;color:#000;letter-spacing:0.412px">(Фукідід, Аристотель)</div>
<div class="t" style="left:38.20px;top:204.65px;font-size:23px;color:#f00000;font-weight:bold;font-style:italic;letter-spacing:-0.495px">Homo Urbanus</div>
<div class="t" style="left:204.00px;top:204.65px;font-size:23px;color:#000;font-weight:bold;font-style:italic;letter-spacing:-0.141px">– освічена, шляхетна людина</div>
<div class="t" style="left:589.30px;top:204.95px;font-size:23px;color:#000;letter-spacing:0.591px">(Цицерон)</div>
<div class="t" style="left:38.20px;top:279.45px;font-size:23px;color:#000;font-weight:bold;font-style:italic;letter-spacing:-0.131px">“Всередині кожного міста є інше місто”</div>
<div class="t" style="left:578.20px;top:278.95px;font-size:23px;color:#000;letter-spacing:0.138px">(Ж. Дельоз)</div>
<svg class="a" style="left:1px;top:348.5px" width="782" height="237.5" viewBox="0 0 782 237.5"><defs><linearGradient id="sky" x1="0" y1="0" x2="0" y2="1"><stop offset="0" stop-color="#d8d8e0"/><stop offset="0.05" stop-color="#e4e4eb"/><stop offset="0.14" stop-color="#f0f0f4"/><stop offset="0.3" stop-color="#f8f8fa"/><stop offset="0.6" stop-color="#fafafb"/><stop offset="1" stop-color="#f4f5f8"/></linearGradient><linearGradient id="wat" x1="0" y1="0" x2="0" y2="1"><stop offset="0" stop-color="#d9e2ec"/><stop offset="0.25" stop-color="#d3deea"/><stop offset="0.55" stop-color="#c9d8e8"/><stop offset="0.8" stop-color="#bcd0e8"/><stop offset="1" stop-color="#a6c2e6"/></linearGradient><linearGradient id="watx" x1="0" y1="0" x2="1" y2="0"><stop offset="0" stop-color="#ffffff" stop-opacity="0.15"/><stop offset="0.5" stop-color="#ffffff" stop-opacity="0"/><stop offset="1" stop-color="#7fa8e0" stop-opacity="0.12"/></linearGradient><linearGradient id="haze" x1="0" y1="0" x2="0" y2="1"><stop offset="0" stop-color="#fff" stop-opacity="0.25"/><stop offset="1" stop-color="#fff" stop-opacity="0"/></linearGradient><linearGradient id="rfade" x1="0" y1="0" x2="0" y2="1"><stop offset="0" stop-color="#fff" stop-opacity="0.45"/><stop offset="1" stop-color="#fff" stop-opacity="1"/></linearGradient><pattern id="stripes" width="4" height="2.6" patternUnits="userSpaceOnUse"><rect width="4" height="1" fill="#fff" opacity="0.18"/></pattern><filter id="cb" x="-5%" y="-5%" width="110%" height="110%"><feGaussianBlur stdDeviation="0.7"/></filter><filter id="cb3" x="-5%" y="-20%" width="110%" height="140%"><feGaussianBlur stdDeviation="2.5"/></filter></defs><rect width="782" height="237.5" fill="url(#sky)"/><g filter="url(#cb)"><path d="M0 119.5 L40 111.5 L80 117.5 L150 104.5 L230 111.5 L300 101.5 L360 109.5 L430 97.5 L520 107.5 L600 94.5 L680 104.5 L782 99.5 L782 154.5 L0 154.5z" fill="#e6ebf0"/><rect x="0.0" y="122.5" width="12.0" height="32.5" fill="#b9c2cf"/><rect x="433.6" y="82.0" width="18.4" height="73.0" fill="#e1e6ec"/><rect x="278.0" y="115.5" width="29.0" height="39.5" fill="#dde3ea"/><rect x="12.5" y="95.3" width="22.5" height="59.7" fill="#6089b9"/><rect x="35.0" y="95.3" width="23.4" height="59.7" fill="#4f70a0"/><rect x="67.8" y="95.3" width="33.2" height="59.7" fill="#7ea0c8"/><rect x="77.0" y="109.9" width="37.6" height="45.1" fill="#56709a"/><rect x="128.0" y="105.5" width="12.7" height="49.5" fill="#5a7aa5"/><rect x="142.8" y="99.5" width="25.0" height="55.5" fill="#8a9fbd"/><rect x="166.7" y="96.5" width="17.7" height="58.5" fill="#7c9ac0"/><rect x="182.0" y="96.5" width="37.8" height="58.5" fill="#a9bdd3"/><rect x="228.0" y="93.5" width="21.0" height="61.5" fill="#7ea0c6"/><rect x="242.8" y="114.1" width="35.2" height="40.9" fill="#8aa0bc"/><rect x="267.8" y="129.7" width="43.8" height="25.3" fill="#56698a"/><rect x="313.6" y="91.2" width="16.4" height="63.8" fill="#b8c8da"/><rect x="337.5" y="84.5" width="20.9" height="70.5" fill="#7d90b0"/><rect x="340.7" y="126.5" width="16.6" height="28.5" fill="#c8d2de"/><rect x="358.4" y="113.0" width="21.6" height="42.0" fill="#a5b6cc"/><rect x="380.0" y="130.5" width="27.0" height="24.5" fill="#506585"/><rect x="407.0" y="130.5" width="30.7" height="24.5" fill="#b7c4d4"/><rect x="456.0" y="109.5" width="18.0" height="45.5" fill="#66768f"/><rect x="475.2" y="76.9" width="22.8" height="78.1" fill="#5c85ba"/><rect x="498.0" y="76.9" width="23.0" height="78.1" fill="#4b6fa2"/><rect x="530.0" y="81.5" width="25.0" height="73.5" fill="#6d95c6"/><rect x="540.0" y="99.5" width="35.8" height="55.5" fill="#5a76a2"/><rect x="576.0" y="107.5" width="29.0" height="47.5" fill="#a9b8cb"/><rect x="590.0" y="109.5" width="15.0" height="45.5" fill="#5b6b88"/><rect x="612.0" y="64.5" width="16.6" height="90.5" fill="#d9e0e8"/><rect x="628.0" y="98.2" width="32.0" height="56.8" fill="#c6d1de"/><rect x="623.5" y="130.5" width="29.5" height="24.5" fill="#a8b9cd"/><rect x="654.0" y="130.5" width="25.4" height="24.5" fill="#4f6486"/><rect x="681.0" y="113.5" width="18.7" height="41.5" fill="#aebfd3"/><rect x="700.7" y="85.0" width="20.3" height="70.0" fill="#6b86ad"/><rect x="701.0" y="125.5" width="24.0" height="29.5" fill="#b8c6d6"/><rect x="730.0" y="92.2" width="14.4" height="62.8" fill="#b2c0d2"/><rect x="747.4" y="128.5" width="34.6" height="26.5" fill="#526687"/><rect x="0.0" y="122.5" width="12.0" height="32.0" fill="url(#stripes)"/><rect x="433.6" y="82.0" width="18.4" height="72.5" fill="url(#stripes)"/><rect x="278.0" y="115.5" width="29.0" height="39.0" fill="url(#stripes)"/><rect x="12.5" y="95.3" width="22.5" height="59.2" fill="url(#stripes)"/><rect x="35.0" y="95.3" width="23.4" height="59.2" fill="url(#stripes)"/><rect x="67.8" y="95.3" width="33.2" height="59.2" fill="url(#stripes)"/><rect x="77.0" y="109.9" width="37.6" height="44.6" fill="url(#stripes)"/><rect x="128.0" y="105.5" width="12.7" height="49.0" fill="url(#stripes)"/><rect x="142.8" y="99.5" width="25.0" height="55.0" fill="url(#stripes)"/><rect x="166.7" y="96.5" width="17.7" height="58.0" fill="url(#stripes)"/><rect x="182.0" y="96.5" width="37.8" height="58.0" fill="url(#stripes)"/><rect x="228.0" y="93.5" width="21.0" height="61.0" fill="url(#stripes)"/><rect x="242.8" y="114.1" width="35.2" height="40.4" fill="url(#stripes)"/><rect x="267.8" y="129.7" width="43.8" height="24.8" fill="url(#stripes)"/><rect x="313.6" y="91.2" width="16.4" height="63.3" fill="url(#stripes)"/><rect x="337.5" y="84.5" width="20.9" height="70.0" fill="url(#stripes)"/><rect x="340.7" y="126.5" width="16.6" height="28.0" fill="url(#stripes)"/><rect x="358.4" y="113.0" width="21.6" height="41.5" fill="url(#stripes)"/><rect x="380.0" y="130.5" width="27.0" height="24.0" fill="url(#stripes)"/><rect x="407.0" y="130.5" width="30.7" height="24.0" fill="url(#stripes)"/><rect x="456.0" y="109.5" width="18.0" height="45.0" fill="url(#stripes)"/><rect x="475.2" y="76.9" width="22.8" height="77.6" fill="url(#stripes)"/><rect x="498.0" y="76.9" width="23.0" height="77.6" fill="url(#stripes)"/><rect x="530.0" y="81.5" width="25.0" height="73.0" fill="url(#stripes)"/><rect x="540.0" y="99.5" width="35.8" height="55.0" fill="url(#stripes)"/><rect x="576.0" y="107.5" width="29.0" height="47.0" fill="url(#stripes)"/><rect x="590.0" y="109.5" width="15.0" height="45.0" fill="url(#stripes)"/><rect x="612.0" y="64.5" width="16.6" height="90.0" fill="url(#stripes)"/><rect x="628.0" y="98.2" width="32.0" height="56.3" fill="url(#stripes)"/><rect x="623.5" y="130.5" width="29.5" height="24.0" fill="url(#stripes)"/><rect x="654.0" y="130.5" width="25.4" height="24.0" fill="url(#stripes)"/><rect x="681.0" y="113.5" width="18.7" height="41.0" fill="url(#stripes)"/><rect x="700.7" y="85.0" width="20.3" height="69.5" fill="url(#stripes)"/><rect x="701.0" y="125.5" width="24.0" height="29.0" fill="url(#stripes)"/><rect x="730.0" y="92.2" width="14.4" height="62.3" fill="url(#stripes)"/><rect x="747.4" y="128.5" width="34.6" height="26.0" fill="url(#stripes)"/><rect x="106.0" y="124.5" width="3" height="30.0" fill="#f2f5f8"/><rect x="221.0" y="124.5" width="3" height="30.0" fill="#f2f5f8"/><rect x="335.5" y="124.5" width="3" height="30.0" fill="#f2f5f8"/><rect x="565.6" y="124.5" width="3" height="30.0" fill="#f2f5f8"/><rect x="681.4" y="124.5" width="3" height="30.0" fill="#f2f5f8"/><rect x="457.0" y="139.5" width="17" height="15" fill="#eef2f6"/><rect x="590.0" y="139.5" width="14" height="15" fill="#eef2f6"/></g><rect x="0" y="59.5" width="782" height="60" fill="url(#haze)"/><rect x="0" y="154.0" width="782" height="2.2" fill="#8e98a8"/><rect x="0" y="156.2" width="782" height="81.3" fill="url(#wat)"/><g filter="url(#cb3)"><rect x="0.0" y="156.2" width="12.0" height="19.2" fill="#b9c2cf" opacity="0.28"/><rect x="433.6" y="156.2" width="18.4" height="43.5" fill="#e1e6ec" opacity="0.28"/><rect x="278.0" y="156.2" width="29.0" height="23.4" fill="#dde3ea" opacity="0.28"/><rect x="12.5" y="156.2" width="22.5" height="35.5" fill="#6089b9" opacity="0.28"/><rect x="35.0" y="156.2" width="23.4" height="35.5" fill="#4f70a0" opacity="0.28"/><rect x="67.8" y="156.2" width="33.2" height="35.5" fill="#7ea0c8" opacity="0.28"/><rect x="77.0" y="156.2" width="37.6" height="26.8" fill="#56709a" opacity="0.28"/><rect x="128.0" y="156.2" width="12.7" height="29.4" fill="#5a7aa5" opacity="0.28"/><rect x="142.8" y="156.2" width="25.0" height="33.0" fill="#8a9fbd" opacity="0.28"/><rect x="166.7" y="156.2" width="17.7" height="34.8" fill="#7c9ac0" opacity="0.28"/><rect x="182.0" y="156.2" width="37.8" height="34.8" fill="#a9bdd3" opacity="0.28"/><rect x="228.0" y="156.2" width="21.0" height="36.6" fill="#7ea0c6" opacity="0.28"/><rect x="242.8" y="156.2" width="35.2" height="24.2" fill="#8aa0bc" opacity="0.28"/><rect x="267.8" y="156.2" width="43.8" height="14.9" fill="#56698a" opacity="0.28"/><rect x="313.6" y="156.2" width="16.4" height="38.0" fill="#b8c8da" opacity="0.28"/><rect x="337.5" y="156.2" width="20.9" height="42.0" fill="#7d90b0" opacity="0.28"/><rect x="340.7" y="156.2" width="16.6" height="16.8" fill="#c8d2de" opacity="0.28"/><rect x="358.4" y="156.2" width="21.6" height="24.9" fill="#a5b6cc" opacity="0.28"/><rect x="380.0" y="156.2" width="27.0" height="14.4" fill="#506585" opacity="0.28"/><rect x="407.0" y="156.2" width="30.7" height="14.4" fill="#b7c4d4" opacity="0.28"/><rect x="456.0" y="156.2" width="18.0" height="27.0" fill="#66768f" opacity="0.28"/><rect x="475.2" y="156.2" width="22.8" height="45.0" fill="#5c85ba" opacity="0.28"/><rect x="498.0" y="156.2" width="23.0" height="45.0" fill="#4b6fa2" opacity="0.28"/><rect x="530.0" y="156.2" width="25.0" height="43.8" fill="#6d95c6" opacity="0.28"/><rect x="540.0" y="156.2" width="35.8" height="33.0" fill="#5a76a2" opacity="0.28"/><rect x="576.0" y="156.2" width="29.0" height="28.2" fill="#a9b8cb" opacity="0.28"/><rect x="590.0" y="156.2" width="15.0" height="27.0" fill="#5b6b88" opacity="0.28"/><rect x="612.0" y="156.2" width="16.6" height="45.0" fill="#d9e0e8" opacity="0.28"/><rect x="628.0" y="156.2" width="32.0" height="33.8" fill="#c6d1de" opacity="0.28"/><rect x="623.5" y="156.2" width="29.5" height="14.4" fill="#a8b9cd" opacity="0.28"/><rect x="654.0" y="156.2" width="25.4" height="14.4" fill="#4f6486" opacity="0.28"/><rect x="681.0" y="156.2" width="18.7" height="24.6" fill="#aebfd3" opacity="0.28"/><rect x="700.7" y="156.2" width="20.3" height="41.7" fill="#6b86ad" opacity="0.28"/><rect x="701.0" y="156.2" width="24.0" height="17.4" fill="#b8c6d6" opacity="0.28"/><rect x="730.0" y="156.2" width="14.4" height="37.4" fill="#b2c0d2" opacity="0.28"/><rect x="747.4" y="156.2" width="34.6" height="15.6" fill="#526687" opacity="0.28"/><rect x="106.0" y="156.2" width="3" height="30" fill="#fff" opacity="0.6"/><rect x="221.0" y="156.2" width="3" height="30" fill="#fff" opacity="0.6"/><rect x="335.5" y="156.2" width="3" height="30" fill="#fff" opacity="0.6"/><rect x="565.6" y="156.2" width="3" height="30" fill="#fff" opacity="0.6"/><rect x="681.4" y="156.2" width="3" height="30" fill="#fff" opacity="0.6"/></g><rect x="0" y="156.2" width="782" height="81.3" fill="url(#watx)"/></svg></div>
<svg class="a" style="left:1109px;top:617px;" width="12" height="17" viewBox="0 0 12 17"><path d="M1.5 1v12l3-3 2.5 5.5 2-1-2.5-5h4z" fill="#fff" stroke="#333" stroke-width="1"/></svg>
<div class="a" style="left:0;top:0;width:226px;height:925px;overflow:hidden"><svg class="a" style="left:18px;top:296px;" width="7" height="10" viewBox="0 0 7 10"><path d="M1 2.6L4.2 0.6V9.8" fill="none" stroke="#b34a3a" stroke-width="1.3"/></svg>
<div class="t" style="left:18.30px;top:444.45px;font-size:13px;color:#505050">2</div>
<div class="t" style="left:18.30px;top:593.95px;font-size:13px;color:#505050">3</div>
<div class="t" style="left:18.30px;top:742.95px;font-size:13px;color:#505050">4</div>
<div class="t" style="left:18.30px;top:891.95px;font-size:13px;color:#505050">5</div>
<div class="a" style="left:30px;top:294px;width:177px;height:134px;background:#e0704e;"></div>
<div class="a" style="left:33px;top:296.6px;width:171px;height:128.2px;overflow:hidden;background:#fff"><div class="a" style="left:0;top:0;width:783px;height:587px;transform:scale(0.2184);transform-origin:0 0"><div class="t" style="left:257.30px;top:19.80px;font-size:32px;color:#f00000;font-weight:bold;letter-spacing:-1.510px">ФІЛОСОФІЯ МІСТА</div>
<div class="t" style="left:193.20px;top:60.50px;font-size:32px;color:#000;font-weight:bold;letter-spacing:-0.858px">антропоцентричний підхід</div>
<div class="t" style="left:38.20px;top:129.65px;font-size:23px;color:#000;font-weight:bold;font-style:italic;letter-spacing:-0.182px">“Міста – це люди, а не стіни”</div>
<div class="t" style="left:471.70px;top:129.95px;font-size:23px;color:#000;letter-spacing:0.412px">(Фукідід, Аристотель)</div>
<div class="t" style="left:38.20px;top:204.65px;font-size:23px;color:#f00000;font-weight:bold;font-style:italic;letter-spacing:-0.495px">Homo Urbanus</div>
<div class="t" style="left:204.00px;top:204.65px;font-size:23px;color:#000;font-weight:bold;font-style:italic;letter-spacing:-0.141px">– освічена, шляхетна людина</div>
<div class="t" style="left:589.30px;top:204.95px;font-size:23px;color:#000;letter-spacing:0.591px">(Цицерон)</div>
<div class="t" style="left:38.20px;top:279.45px;font-size:23px;color:#000;font-weight:bold;font-style:italic;letter-spacing:-0.131px">“Всередині кожного міста є інше місто”</div>
<div class="t" style="left:578.20px;top:278.95px;font-size:23px;color:#000;letter-spacing:0.138px">(Ж. Дельоз)</div>
<svg class="a" style="left:1px;top:348.5px" width="782" height="237.5" viewBox="0 0 782 237.5"><defs><linearGradient id="sky" x1="0" y1="0" x2="0" y2="1"><stop offset="0" stop-color="#d8d8e0"/><stop offset="0.05" stop-color="#e4e4eb"/><stop offset="0.14" stop-color="#f0f0f4"/><stop offset="0.3" stop-color="#f8f8fa"/><stop offset="0.6" stop-color="#fafafb"/><stop offset="1" stop-color="#f4f5f8"/></linearGradient><linearGradient id="wat" x1="0" y1="0" x2="0" y2="1"><stop offset="0" stop-color="#d9e2ec"/><stop offset="0.25" stop-color="#d3deea"/><stop offset="0.55" stop-color="#c9d8e8"/><stop offset="0.8" stop-color="#bcd0e8"/><stop offset="1" stop-color="#a6c2e6"/></linearGradient><linearGradient id="watx" x1="0" y1="0" x2="1" y2="0"><stop offset="0" stop-color="#ffffff" stop-opacity="0.15"/><stop offset="0.5" stop-color="#ffffff" stop-opacity="0"/><stop offset="1" stop-color="#7fa8e0" stop-opacity="0.12"/></linearGradient><linearGradient id="haze" x1="0" y1="0" x2="0" y2="1"><stop offset="0" stop-color="#fff" stop-opacity="0.25"/><stop offset="1" stop-color="#fff" stop-opacity="0"/></linearGradient><linearGradient id="rfade" x1="0" y1="0" x2="0" y2="1"><stop offset="0" stop-color="#fff" stop-opacity="0.45"/><stop offset="1" stop-color="#fff" stop-opacity="1"/></linearGradient><pattern id="stripes" width="4" height="2.6" patternUnits="userSpaceOnUse"><rect width="4" height="1" fill="#fff" opacity="0.18"/></pattern><filter id="cb" x="-5%" y="-5%" width="110%" height="110%"><feGaussianBlur stdDeviation="0.7"/></filter><filter id="cb3" x="-5%" y="-20%" width="110%" height="140%"><feGaussianBlur stdDeviation="2.5"/></filter></defs><rect width="782" height="237.5" fill="url(#sky)"/><g filter="url(#cb)"><path d="M0 119.5 L40 111.5 L80 117.5 L150 104.5 L230 111.5 L300 101.5 L360 109.5 L430 97.5 L520 107.5 L600 94.5 L680 104.5 L782 99.5 L782 154.5 L0 154.5z" fill="#e6ebf0"/><rect x="0.0" y="122.5" width="12.0" height="32.5" fill="#b9c2cf"/><rect x="433.6" y="82.0" width="18.4" height="73.0" fill="#e1e6ec"/><rect x="278.0" y="115.5" width="29.0" height="39.5" fill="#dde3ea"/><rect x="12.5" y="95.3" width="22.5" height="59.7" fill="#6089b9"/><rect x="35.0" y="95.3" width="23.4" height="59.7" fill="#4f70a0"/><rect x="67.8" y="95.3" width="33.2" height="59.7" fill="#7ea0c8"/><rect x="77.0" y="109.9" width="37.6" height="45.1" fill="#56709a"/><rect x="128.0" y="105.5" width="12.7" height="49.5" fill="#5a7aa5"/><rect x="142.8" y="99.5" width="25.0" height="55.5" fill="#8a9fbd"/><rect x="166.7" y="96.5" width="17.7" height="58.5" fill="#7c9ac0"/><rect x="182.0" y="96.5" width="37.8" height="58.5" fill="#a9bdd3"/><rect x="228.0" y="93.5" width="21.0" height="61.5" fill="#7ea0c6"/><rect x="242.8" y="114.1" width="35.2" height="40.9" fill="#8aa0bc"/><rect x="267.8" y="129.7" width="43.8" height="25.3" fill="#56698a"/><rect x="313.6" y="91.2" width="16.4" height="63.8" fill="#b8c8da"/><rect x="337.5" y="84.5" width="20.9" height="70.5" fill="#7d90b0"/><rect x="340.7" y="126.5" width="16.6" height="28.5" fill="#c8d2de"/><rect x="358.4" y="113.0" width="21.6" height="42.0" fill="#a5b6cc"/><rect x="380.0" y="130.5" width="27.0" height="24.5" fill="#506585"/><rect x="407.0" y="130.5" width="30.7" height="24.5" fill="#b7c4d4"/><rect x="456.0" y="109.5" width="18.0" height="45.5" fill="#66768f"/><rect x="475.2" y="76.9" width="22.8" height="78.1" fill="#5c85ba"/><rect x="498.0" y="76.9" width="23.0" height="78.1" fill="#4b6fa2"/><rect x="530.0" y="81.5" width="25.0" height="73.5" fill="#6d95c6"/><rect x="540.0" y="99.5" width="35.8" height="55.5" fill="#5a76a2"/><rect x="576.0" y="107.5" width="29.0" height="47.5" fill="#a9b8cb"/><rect x="590.0" y="109.5" width="15.0" height="45.5" fill="#5b6b88"/><rect x="612.0" y="64.5" width="16.6" height="90.5" fill="#d9e0e8"/><rect x="628.0" y="98.2" width="32.0" height="56.8" fill="#c6d1de"/><rect x="623.5" y="130.5" width="29.5" height="24.5" fill="#a8b9cd"/><rect x="654.0" y="130.5" width="25.4" height="24.5" fill="#4f6486"/><rect x="681.0" y="113.5" width="18.7" height="41.5" fill="#aebfd3"/><rect x="700.7" y="85.0" width="20.3" height="70.0" fill="#6b86ad"/><rect x="701.0" y="125.5" width="24.0" height="29.5" fill="#b8c6d6"/><rect x="730.0" y="92.2" width="14.4" height="62.8" fill="#b2c0d2"/><rect x="747.4" y="128.5" width="34.6" height="26.5" fill="#526687"/><rect x="0.0" y="122.5" width="12.0" height="32.0" fill="url(#stripes)"/><rect x="433.6" y="82.0" width="18.4" height="72.5" fill="url(#stripes)"/><rect x="278.0" y="115.5" width="29.0" height="39.0" fill="url(#stripes)"/><rect x="12.5" y="95.3" width="22.5" height="59.2" fill="url(#stripes)"/><rect x="35.0" y="95.3" width="23.4" height="59.2" fill="url(#stripes)"/><rect x="67.8" y="95.3" width="33.2" height="59.2" fill="url(#stripes)"/><rect x="77.0" y="109.9" width="37.6" height="44.6" fill="url(#stripes)"/><rect x="128.0" y="105.5" width="12.7" height="49.0" fill="url(#stripes)"/><rect x="142.8" y="99.5" width="25.0" height="55.0" fill="url(#stripes)"/><rect x="166.7" y="96.5" width="17.7" height="58.0" fill="url(#stripes)"/><rect x="182.0" y="96.5" width="37.8" height="58.0" fill="url(#stripes)"/><rect x="228.0" y="93.5" width="21.0" height="61.0" fill="url(#stripes)"/><rect x="242.8" y="114.1" width="35.2" height="40.4" fill="url(#stripes)"/><rect x="267.8" y="129.7" width="43.8" height="24.8" fill="url(#stripes)"/><rect x="313.6" y="91.2" width="16.4" height="63.3" fill="url(#stripes)"/><rect x="337.5" y="84.5" width="20.9" height="70.0" fill="url(#stripes)"/><rect x="340.7" y="126.5" width="16.6" height="28.0" fill="url(#stripes)"/><rect x="358.4" y="113.0" width="21.6" height="41.5" fill="url(#stripes)"/><rect x="380.0" y="130.5" width="27.0" height="24.0" fill="url(#stripes)"/><rect x="407.0" y="130.5" width="30.7" height="24.0" fill="url(#stripes)"/><rect x="456.0" y="109.5" width="18.0" height="45.0" fill="url(#stripes)"/><rect x="475.2" y="76.9" width="22.8" height="77.6" fill="url(#stripes)"/><rect x="498.0" y="76.9" width="23.0" height="77.6" fill="url(#stripes)"/><rect x="530.0" y="81.5" width="25.0" height="73.0" fill="url(#stripes)"/><rect x="540.0" y="99.5" width="35.8" height="55.0" fill="url(#stripes)"/><rect x="576.0" y="107.5" width="29.0" height="47.0" fill="url(#stripes)"/><rect x="590.0" y="109.5" width="15.0" height="45.0" fill="url(#stripes)"/><rect x="612.0" y="64.5" width="16.6" height="90.0" fill="url(#stripes)"/><rect x="628.0" y="98.2" width="32.0" height="56.3" fill="url(#stripes)"/><rect x="623.5" y="130.5" width="29.5" height="24.0" fill="url(#stripes)"/><rect x="654.0" y="130.5" width="25.4" height="24.0" fill="url(#stripes)"/><rect x="681.0" y="113.5" width="18.7" height="41.0" fill="url(#stripes)"/><rect x="700.7" y="85.0" width="20.3" height="69.5" fill="url(#stripes)"/><rect x="701.0" y="125.5" width="24.0" height="29.0" fill="url(#stripes)"/><rect x="730.0" y="92.2" width="14.4" height="62.3" fill="url(#stripes)"/><rect x="747.4" y="128.5" width="34.6" height="26.0" fill="url(#stripes)"/><rect x="106.0" y="124.5" width="3" height="30.0" fill="#f2f5f8"/><rect x="221.0" y="124.5" width="3" height="30.0" fill="#f2f5f8"/><rect x="335.5" y="124.5" width="3" height="30.0" fill="#f2f5f8"/><rect x="565.6" y="124.5" width="3" height="30.0" fill="#f2f5f8"/><rect x="681.4" y="124.5" width="3" height="30.0" fill="#f2f5f8"/><rect x="457.0" y="139.5" width="17" height="15" fill="#eef2f6"/><rect x="590.0" y="139.5" width="14" height="15" fill="#eef2f6"/></g><rect x="0" y="59.5" width="782" height="60" fill="url(#haze)"/><rect x="0" y="154.0" width="782" height="2.2" fill="#8e98a8"/><rect x="0" y="156.2" width="782" height="81.3" fill="url(#wat)"/><g filter="url(#cb3)"><rect x="0.0" y="156.2" width="12.0" height="19.2" fill="#b9c2cf" opacity="0.28"/><rect x="433.6" y="156.2" width="18.4" height="43.5" fill="#e1e6ec" opacity="0.28"/><rect x="278.0" y="156.2" width="29.0" height="23.4" fill="#dde3ea" opacity="0.28"/><rect x="12.5" y="156.2" width="22.5" height="35.5" fill="#6089b9" opacity="0.28"/><rect x="35.0" y="156.2" width="23.4" height="35.5" fill="#4f70a0" opacity="0.28"/><rect x="67.8" y="156.2" width="33.2" height="35.5" fill="#7ea0c8" opacity="0.28"/><rect x="77.0" y="156.2" width="37.6" height="26.8" fill="#56709a" opacity="0.28"/><rect x="128.0" y="156.2" width="12.7" height="29.4" fill="#5a7aa5" opacity="0.28"/><rect x="142.8" y="156.2" width="25.0" height="33.0" fill="#8a9fbd" opacity="0.28"/><rect x="166.7" y="156.2" width="17.7" height="34.8" fill="#7c9ac0" opacity="0.28"/><rect x="182.0" y="156.2" width="37.8" height="34.8" fill="#a9bdd3" opacity="0.28"/><rect x="228.0" y="156.2" width="21.0" height="36.6" fill="#7ea0c6" opacity="0.28"/><rect x="242.8" y="156.2" width="35.2" height="24.2" fill="#8aa0bc" opacity="0.28"/><rect x="267.8" y="156.2" width="43.8" height="14.9" fill="#56698a" opacity="0.28"/><rect x="313.6" y="156.2" width="16.4" height="38.0" fill="#b8c8da" opacity="0.28"/><rect x="337.5" y="156.2" width="20.9" height="42.0" fill="#7d90b0" opacity="0.28"/><rect x="340.7" y="156.2" width="16.6" height="16.8" fill="#c8d2de" opacity="0.28"/><rect x="358.4" y="156.2" width="21.6" height="24.9" fill="#a5b6cc" opacity="0.28"/><rect x="380.0" y="156.2" width="27.0" height="14.4" fill="#506585" opacity="0.28"/><rect x="407.0" y="156.2" width="30.7" height="14.4" fill="#b7c4d4" opacity="0.28"/><rect x="456.0" y="156.2" width="18.0" height="27.0" fill="#66768f" opacity="0.28"/><rect x="475.2" y="156.2" width="22.8" height="45.0" fill="#5c85ba" opacity="0.28"/><rect x="498.0" y="156.2" width="23.0" height="45.0" fill="#4b6fa2" opacity="0.28"/><rect x="530.0" y="156.2" width="25.0" height="43.8" fill="#6d95c6" opacity="0.28"/><rect x="540.0" y="156.2" width="35.8" height="33.0" fill="#5a76a2" opacity="0.28"/><rect x="576.0" y="156.2" width="29.0" height="28.2" fill="#a9b8cb" opacity="0.28"/><rect x="590.0" y="156.2" width="15.0" height="27.0" fill="#5b6b88" opacity="0.28"/><rect x="612.0" y="156.2" width="16.6" height="45.0" fill="#d9e0e8" opacity="0.28"/><rect x="628.0" y="156.2" width="32.0" height="33.8" fill="#c6d1de" opacity="0.28"/><rect x="623.5" y="156.2" width="29.5" height="14.4" fill="#a8b9cd" opacity="0.28"/><rect x="654.0" y="156.2" width="25.4" height="14.4" fill="#4f6486" opacity="0.28"/><rect x="681.0" y="156.2" width="18.7" height="24.6" fill="#aebfd3" opacity="0.28"/><rect x="700.7" y="156.2" width="20.3" height="41.7" fill="#6b86ad" opacity="0.28"/><rect x="701.0" y="156.2" width="24.0" height="17.4" fill="#b8c6d6" opacity="0.28"/><rect x="730.0" y="156.2" width="14.4" height="37.4" fill="#b2c0d2" opacity="0.28"/><rect x="747.4" y="156.2" width="34.6" height="15.6" fill="#526687" opacity="0.28"/><rect x="106.0" y="156.2" width="3" height="30" fill="#fff" opacity="0.6"/><rect x="221.0" y="156.2" width="3" height="30" fill="#fff" opacity="0.6"/><rect x="335.5" y="156.2" width="3" height="30" fill="#fff" opacity="0.6"/><rect x="565.6" y="156.2" width="3" height="30" fill="#fff" opacity="0.6"/><rect x="681.4" y="156.2" width="3" height="30" fill="#fff" opacity="0.6"/></g><rect x="0" y="156.2" width="782" height="81.3" fill="url(#watx)"/></svg></div></div>
<div class="a" style="left:32px;top:445px;width:174px;height:130px;background:#fff;border:1px solid #c8c8c8"></div>
<svg class="a" style="left:0;top:0" width="260" height="930" viewBox="0 0 260 930"><defs><linearGradient id="bk1" x1="0" y1="0" x2="0" y2="1"><stop offset="0" stop-color="#2f6fbd"/><stop offset="0.45" stop-color="#b9cde4"/><stop offset="0.55" stop-color="#7fa070"/><stop offset="1" stop-color="#1f5a24"/></linearGradient><linearGradient id="bk7" x1="0" y1="0" x2="0" y2="1"><stop offset="0" stop-color="#1f6fd0"/><stop offset="0.5" stop-color="#6d8db0"/><stop offset="1" stop-color="#2a3346"/></linearGradient><linearGradient id="bk8" x1="0" y1="0" x2="0" y2="1"><stop offset="0" stop-color="#222"/><stop offset="1" stop-color="#5a5a5a"/></linearGradient></defs><rect x="41" y="452.7" width="38.2" height="56" fill="url(#bk1)"/><text x="44" y="466" font-size="7" fill="#2a55a0" font-family="Liberation Sans">Homo</text><text x="44" y="474" font-size="7" fill="#2a55a0" font-family="Liberation Sans">urbanus</text><rect x="84.1" y="452.7" width="35.5" height="56" fill="#8b7961"/><rect x="97" y="499" width="8" height="8" fill="#3a5bb5"/><rect x="86" y="455" width="31" height="1.5" fill="#d8ccb8"/><rect x="123.3" y="452.7" width="39.5" height="52.8" fill="#d6d6d2"/><path d="M128 456h30v8h-30z" fill="#555" opacity="0.6"/><ellipse cx="141" cy="478" rx="10" ry="14" fill="#f2f2ef" stroke="#444" stroke-width="0.8"/><rect x="124" y="488" width="38" height="5" fill="#333" opacity="0.7"/><path d="M130 505l6-12h12l6 12z" fill="#bbb"/><rect x="167" y="452.7" width="34" height="53.3" fill="#a9aba5"/><rect x="168.0" y="454.0" width="2.2" height="4.5" fill="#3d7a2a"/><rect x="181.6" y="454.0" width="2.2" height="4.5" fill="#3d7a2a"/><rect x="195.2" y="454.0" width="2.2" height="4.5" fill="#3d7a2a"/><rect x="174.8" y="459.5" width="2.2" height="4.5" fill="#3d7a2a"/><rect x="188.4" y="459.5" width="2.2" height="4.5" fill="#3d7a2a"/><rect x="168.0" y="465.0" width="2.2" height="4.5" fill="#3d7a2a"/><rect x="181.6" y="465.0" width="2.2" height="4.5" fill="#3d7a2a"/><rect x="195.2" y="465.0" width="2.2" height="4.5" fill="#3d7a2a"/><rect x="174.8" y="470.5" width="2.2" height="4.5" fill="#3d7a2a"/><rect x="188.4" y="470.5" width="2.2" height="4.5" fill="#3d7a2a"/><rect x="168.0" y="476.0" width="2.2" height="4.5" fill="#3d7a2a"/><rect x="181.6" y="476.0" width="2.2" height="4.5" fill="#3d7a2a"/><rect x="195.2" y="476.0" width="2.2" height="4.5" fill="#3d7a2a"/><rect x="174.8" y="481.5" width="2.2" height="4.5" fill="#3d7a2a"/><rect x="188.4" y="481.5" width="2.2" height="4.5" fill="#3d7a2a"/><rect x="168.0" y="487.0" width="2.2" height="4.5" fill="#3d7a2a"/><rect x="181.6" y="487.0" width="2.2" height="4.5" fill="#3d7a2a"/><rect x="195.2" y="487.0" width="2.2" height="4.5" fill="#3d7a2a"/><rect x="174.8" y="492.5" width="2.2" height="4.5" fill="#3d7a2a"/><rect x="188.4" y="492.5" width="2.2" height="4.5" fill="#3d7a2a"/><rect x="168.0" y="498.0" width="2.2" height="4.5" fill="#3d7a2a"/><rect x="181.6" y="498.0" width="2.2" height="4.5" fill="#3d7a2a"/><rect x="195.2" y="498.0" width="2.2" height="4.5" fill="#3d7a2a"/><rect x="167" y="498" width="34" height="8" fill="#3a6a2a" opacity="0.8"/><rect x="41" y="512.8" width="35.9" height="50.9" fill="#6f9f5f"/><rect x="41" y="512.8" width="10" height="50.9" fill="#1f3f6f"/><rect x="51" y="525" width="12" height="20" fill="#e8e8d8"/><rect x="63" y="520" width="8" height="43" fill="#2a5f9f"/><rect x="45" y="533" width="6" height="6" fill="#e0c040"/><rect x="55" y="548" width="8" height="15" fill="#d8c880"/><rect x="85" y="513.2" width="35.7" height="52.4" fill="#f3f3f3"/><rect x="118" y="514" width="2.5" height="51" fill="#bdbdbd"/><circle cx="96" cy="547" r="5.5" fill="#c21a1a"/><path d="M99 540l10-6 5 10-8 3z" fill="#222"/><text x="90" y="530" font-size="4" fill="#333" font-family="Liberation Sans">Homo</text><rect x="92" y="533" width="16" height="1.5" fill="#d04040"/><rect x="125.9" y="513" width="38.1" height="52.6" fill="url(#bk7)"/><rect x="130" y="532" width="8" height="33" fill="#2c4f7a"/><rect x="150" y="528" width="10" height="37" fill="#2a4c78"/><rect x="128" y="521" width="34" height="1.6" fill="#e8eef8"/><rect x="169.9" y="513" width="32.1" height="51" fill="url(#bk8)"/><path d="M195 515l7 8-7 12z" fill="#e25a2a"/><path d="M171 545l10 10-10 8z" fill="#2aa8a0"/><rect x="181" y="541" width="14" height="3" fill="#e8c030"/><rect x="173" y="516" width="4" height="4" fill="#ddd"/></svg>
<div class="a" style="left:32px;top:594.5px;width:174px;height:129.5px;background:#fff;border:1px solid #c8c8c8"></div>
<svg class="a" style="left:0;top:0" width="260" height="930" viewBox="0 0 260 930"><defs><linearGradient id="sk3" x1="0" y1="0" x2="0" y2="1"><stop offset="0" stop-color="#8d98ab"/><stop offset="0.45" stop-color="#c5c8cc"/><stop offset="0.75" stop-color="#6b6a68"/><stop offset="1" stop-color="#2e2e2e"/></linearGradient><linearGradient id="sk3b" x1="0" y1="0" x2="1" y2="0"><stop offset="0" stop-color="#8c9cb5"/><stop offset="1" stop-color="#c9ccd2"/></linearGradient></defs><rect x="33.9" y="595.8" width="59.6" height="124.4" fill="url(#sk3b)"/><rect x="33.9" y="680" width="59.6" height="40.2" fill="#4a4846" opacity="0.85"/><rect x="34" y="596" width="10" height="124" fill="#4b4234"/><rect x="36" y="598" width="2" height="120" fill="#b8a060" opacity="0.7"/><path d="M53.5 597L58 620V720H49V620z" fill="#3a3c40"/><rect x="44" y="690" width="12" height="30" fill="#595b5e"/><rect x="62" y="700" width="30" height="20" fill="#3c3c3c"/><rect x="68" y="660" width="6" height="60" fill="#707070"/><path d="M116 625.6h63v-4.6l18.7 19-18.7 19v-4.6h-63z" fill="#d5dce9"/><path d="M116 666h63v-4.1l18.7 17.8-18.7 17.8v-4.1h-63z" fill="#d5dce9"/><rect x="120" y="629.0" width="55" height="1.2" fill="#a3a7b0"/><rect x="121" y="632.7" width="55" height="1.2" fill="#a3a7b0"/><rect x="121" y="636.4" width="55" height="1.2" fill="#a3a7b0"/><rect x="121" y="640.1" width="55" height="1.2" fill="#a3a7b0"/><rect x="121" y="643.8" width="30" height="1.2" fill="#a3a7b0"/><rect x="63" y="621.7" width="53.1" height="36.3" rx="6" fill="#4f7fc3" stroke="#dbe6f5" stroke-width="0.8"/><rect x="63" y="662.5" width="53.1" height="35" rx="6" fill="#4f7fc3" stroke="#dbe6f5" stroke-width="0.8"/><text x="89.5" y="642.3" font-size="6" font-weight="bold" text-anchor="middle" fill="#e2f24a" font-family="Liberation Sans">ВИКЛИКИ</text><text x="89.5" y="681.8" font-size="6.6" font-weight="bold" text-anchor="middle" fill="#e2f24a" font-family="Liberation Sans">МОЖЛИВОСТІ</text><rect x="117.4" y="660.6" width="59" height="44.7" fill="#b59c7e"/><circle cx="146" cy="673" r="4" fill="#6b4a30"/><path d="M138 693l8-16 8 16z" fill="#263a6a"/><rect x="150" y="690" width="9" height="8" fill="#27468a"/><g fill="#f3efe6"><circle cx="128" cy="670" r="2.5"/><rect x="157" y="666" width="5" height="8"/><circle cx="165" cy="690" r="2.5"/><rect x="124" y="684" width="4" height="4"/><circle cx="162" cy="678" r="2"/></g><text x="123.3" y="615.9" font-size="12.8" font-weight="bold" fill="#e0161c" font-family="Liberation Sans" textLength="37" lengthAdjust="spacingAndGlyphs">МЕГА-</text></svg>
<div class="a" style="left:32px;top:743.3px;width:174px;height:130.20000000000005px;background:#fff;border:1px solid #c8c8c8"></div>
<svg class="a" style="left:0;top:0" width="260" height="930" viewBox="0 0 260 930"><text x="47.6" y="764.7" font-size="9.6" font-weight="bold" fill="#6b3fa0" font-family="Liberation Sans" textLength="143.4" lengthAdjust="spacingAndGlyphs">ЕКЗИСТЕНЦІЙНІ ТИПИ ГОРОДЯН</text><text x="44" y="781.3" font-size="4.6" font-weight="bold" fill="#111" font-family="Liberation Sans" textLength="35" lengthAdjust="spacingAndGlyphs">•  ОБИВАТЕЛЬ</text><text x="107.4" y="781.3" font-size="4.6" font-weight="bold" fill="#2f9a50" font-family="Liberation Sans" textLength="17.6" lengthAdjust="spacingAndGlyphs">ШУКАЧ</text><text x="156.7" y="781.3" font-size="4.6" font-weight="bold" fill="#e02020" font-family="Liberation Sans" textLength="22" lengthAdjust="spacingAndGlyphs">ТВОРЕЦЬ</text><text x="44" y="789.3" font-size="4.8" fill="#666" font-family="Liberation Sans" textLength="44" lengthAdjust="spacingAndGlyphs">Редукція простору</text><text x="94.7" y="789.3" font-size="4.8" fill="#666" font-family="Liberation Sans" textLength="47.5" lengthAdjust="spacingAndGlyphs">Засвоєння простору</text><text x="146.5" y="789.3" font-size="4.8" fill="#666" font-family="Liberation Sans" textLength="45.4" lengthAdjust="spacingAndGlyphs">Творення простору</text><ellipse cx="62.5" cy="823" rx="21.5" ry="16" fill="#e6c6c8"/><path d="M42 820c2-8 12-10 18-6l20 4c4 1 5 6 2 9l-4 10H48c-6-2-8-10-6-17z" fill="#b42a3a"/><ellipse cx="60" cy="822" rx="14" ry="6" fill="#e9c8d8"/><circle cx="50" cy="818" r="3" fill="#8a4a2a"/><defs><linearGradient id="g42" x1="0" y1="0" x2="0" y2="1"><stop offset="0" stop-color="#c9c9c9"/><stop offset="0.5" stop-color="#9a9a9a"/><stop offset="1" stop-color="#4a4a4a"/></linearGradient></defs><rect x="93.7" y="805.7" width="42.3" height="36.1" fill="url(#g42)"/><rect x="114" y="818" width="3" height="12" fill="#333"/><rect x="147" y="805.7" width="45.7" height="35.3" fill="#b9babc"/><ellipse cx="170" cy="820" rx="9" ry="11" fill="#fafafa"/><rect x="147" y="836" width="45.7" height="5" fill="#1a1a1a"/><rect x="168" y="826" width="2.5" height="10" fill="#222"/><rect x="150" y="812" width="3" height="8" fill="#d04030"/><rect x="154" y="809" width="3" height="11" fill="#d04030"/><circle cx="184" cy="812" r="3" fill="#e8c040"/></svg>
<div class="a" style="left:32px;top:892.3px;width:174px;height:42.700000000000045px;background:#fff;border:1px solid #c8c8c8"></div>
<svg class="a" style="left:0;top:0" width="260" height="930" viewBox="0 0 260 930"><text x="52.5" y="911.3" font-size="7.2" font-weight="bold" fill="#e0161c" font-family="Liberation Sans" textLength="132.7" lengthAdjust="spacingAndGlyphs">АНТРОПНИЙ (ФРАКТАЛЬНИЙ) ПРОСТІР</text><text x="81" y="922" font-size="5" font-weight="bold" font-style="italic" fill="#1f2a5a" font-family="Liberation Sans" textLength="89.7" lengthAdjust="spacingAndGlyphs">думай глобально – дій локально!</text></svg></div>
<svg class="a" style="left:1534px;top:433px" width="380" height="214" viewBox="0 0 380 214"><svg x="0" y="0" width="380" height="214"><defs><filter id="vb" x="-20%" y="-20%" width="140%" height="140%"><feGaussianBlur stdDeviation="3"/></filter><filter id="vb2" x="-20%" y="-20%" width="140%" height="140%"><feGaussianBlur stdDeviation="1.5"/></filter><filter id="vb1" x="-20%" y="-20%" width="140%" height="140%"><feGaussianBlur stdDeviation="0.8"/></filter><filter id="vb6" x="-30%" y="-30%" width="160%" height="160%"><feGaussianBlur stdDeviation="5"/></filter><linearGradient id="wall" x1="0" y1="0" x2="0.3" y2="1"><stop offset="0" stop-color="#d6dddc"/><stop offset="0.6" stop-color="#c9d1d1"/><stop offset="1" stop-color="#b9c1c1"/></linearGradient><radialGradient id="face" cx="0.48" cy="0.42" r="0.62"><stop offset="0" stop-color="#ede6e6"/><stop offset="0.55" stop-color="#e6dad8"/><stop offset="0.85" stop-color="#dcc6c0"/><stop offset="1" stop-color="#cfa898"/></radialGradient><radialGradient id="hair" cx="0.45" cy="0.35" r="0.7"><stop offset="0" stop-color="#d46440"/><stop offset="0.6" stop-color="#c65538"/><stop offset="1" stop-color="#a54232"/></radialGradient></defs><rect width="380" height="214" fill="url(#wall)"/><rect x="0" y="0" width="8" height="25" fill="#2a343a"/><rect x="0" y="0" width="5" height="22" fill="#b8cdd6"/><g filter="url(#vb)"><path d="M-14.0 133.0 L26.0 129.0 L46.0 139.0 L50.0 199.0 L-14.0 199.0z" fill="#8a827c"/><path d="M-14.0 165.0 L36.0 161.0 L52.0 173.0 L54.0 227.0 L-14.0 227.0z" fill="#a39d96"/><path d="M18.0 167.0 L32.0 167.0 L34.0 214.0 L20.0 214.0z" fill="#4e4a46"/></g><g filter="url(#vb1)"><path d="M271.0 79.0 L391.0 81.0 L391.0 227.0 L271.0 227.0z" fill="#131318"/><path d="M271.0 77.0 L309.0 77.0 L309.0 83.0 L271.0 83.0z" fill="#2a2a30"/><path d="M313.0 67.0 L330.0 67.0 L330.0 86.0 L313.0 86.0z" fill="#141414"/><path d="M317.0 71.0 L326.0 71.0 L326.0 82.0 L317.0 82.0z" fill="#cfcabd"/></g><g filter="url(#vb1)"><ellipse cx="352" cy="47" rx="8" ry="8" fill="#4d5058"/><ellipse cx="351" cy="45" rx="4" ry="4" fill="#e9ebef"/><rect x="350" y="55" width="4" height="24" fill="#aeb2ba"/><rect x="346" y="77" width="9" height="8" fill="#5e5e60"/><ellipse cx="350" cy="32" rx="4" ry="6" fill="#b8bcc2" opacity="0.7"/><path d="M359.0 57.0 L378.0 57.0 L378.0 85.0 L359.0 85.0z" fill="#cdbf90" opacity="0.75"/></g><g filter="url(#vb2)"><path d="M256.0 115.0 L298.0 111.0 L336.0 127.0 L359.0 157.0 L371.0 227.0 L254.0 227.0z" fill="#2e2729"/><path d="M301.0 115.0 L308.0 117.0 L312.0 167.0 L306.0 214.0 L298.0 214.0 L302.0 167.0z" fill="#5b5053" opacity="0.8"/><path d="M316.0 142.0 L334.0 157.0 L344.0 187.0 L336.0 207.0 L321.0 182.0z" fill="#3e424c" opacity="0.5"/></g><g filter="url(#vb)"><path d="M71.0 182.0 L106.0 172.0 L134.0 192.0 L129.0 227.0 L66.0 227.0z" fill="#b8242a"/><path d="M211.0 192.0 L256.0 182.0 L288.0 197.0 L296.0 227.0 L206.0 227.0z" fill="#b8242a"/></g><g filter="url(#vb6)"><path d="M58.0 87.0 L71.0 55.0 L96.0 25.0 L131.0 8.0 L186.0 3.0 L236.0 9.0 L266.0 35.0 L278.0 77.0 L274.0 112.0 L281.0 157.0 L288.0 227.0 L256.0 227.0 L226.0 199.0 L166.0 207.0 L116.0 207.0 L66.0 197.0 L56.0 167.0 L50.0 122.0z" fill="url(#hair)"/></g><g filter="url(#vb)"><path d="M78.0 87.0 L98.0 45.0 L131.0 23.0 L181.0 17.0 L226.0 29.0 L251.0 59.0 L258.0 97.0 L241.0 72.0 L211.0 47.0 L166.0 41.0 L131.0 59.0 L106.0 95.0 L91.0 127.0z" fill="#de7a4c" opacity="0.5"/><path d="M256.0 127.0 L278.0 147.0 L282.0 207.0 L256.0 212.0 L251.0 167.0z" fill="#8e3f2e" opacity="0.55"/><path d="M61.0 127.0 L81.0 112.0 L96.0 167.0 L84.0 202.0 L64.0 195.0z" fill="#b4553a" opacity="0.6"/></g><g filter="url(#vb)"><path d="M126.0 67.0 L146.0 43.0 L178.0 33.0 L214.0 37.0 L238.0 57.0 L250.0 87.0 L254.0 127.0 L250.0 167.0 L238.0 189.0 L218.0 207.0 L218.0 227.0 L129.0 227.0 L128.0 192.0 L116.0 162.0 L111.0 117.0z" fill="url(#face)"/></g><g filter="url(#vb1)"><path d="M142.0 90.0 L156.0 85.0 L172.0 90.0 L170.0 94.0 L156.0 91.0z" fill="#8a7a78" opacity="0.35"/><path d="M206.0 91.0 L221.0 88.0 L236.0 95.0 L234.0 99.0 L220.0 94.0z" fill="#8a7a78" opacity="0.35"/><ellipse cx="157" cy="97" rx="10" ry="4" fill="#ded8da"/><ellipse cx="159" cy="97" rx="4.2" ry="4" fill="#505861"/><ellipse cx="221" cy="100" rx="10" ry="4" fill="#ded8da"/><ellipse cx="219" cy="100" rx="4.2" ry="4" fill="#505861"/><path d="M176.0 130.0 L186.0 125.0 L200.0 131.0 L194.0 137.0 L180.0 137.0z" fill="#c4a8a4" opacity="0.6"/><ellipse cx="186" cy="168" rx="24" ry="12" fill="#bf7d7e"/><ellipse cx="186" cy="165" rx="17" ry="4.5" fill="#ece4e2"/></g><circle cx="103" cy="160" r="3.5" fill="none" stroke="#c99068" stroke-width="1.6"/><circle cx="249" cy="158" r="3.5" fill="none" stroke="#c99068" stroke-width="1.6"/></svg></svg>
<div class="a" style="left:1534px;top:628px;width:85px;height:19px;background:rgba(20,20,20,0.72);"></div>
<svg class="a" style="left:1537px;top:631px;" width="15" height="13" viewBox="0 0 15 13"><rect x="0" y="8" width="2.4" height="4" fill="#fff"/><rect x="3.6" y="5.5" width="2.4" height="6.5" fill="#fff"/><rect x="7.2" y="3" width="2.4" height="9" fill="#fff"/><rect x="10.8" y="0.5" width="2.4" height="11.5" fill="#fff"/></svg>
<div class="t" style="left:1556.70px;top:630.95px;font-size:13px;color:#f4f4f4;letter-spacing:-0.241px">Марина Р</div></body></html>
